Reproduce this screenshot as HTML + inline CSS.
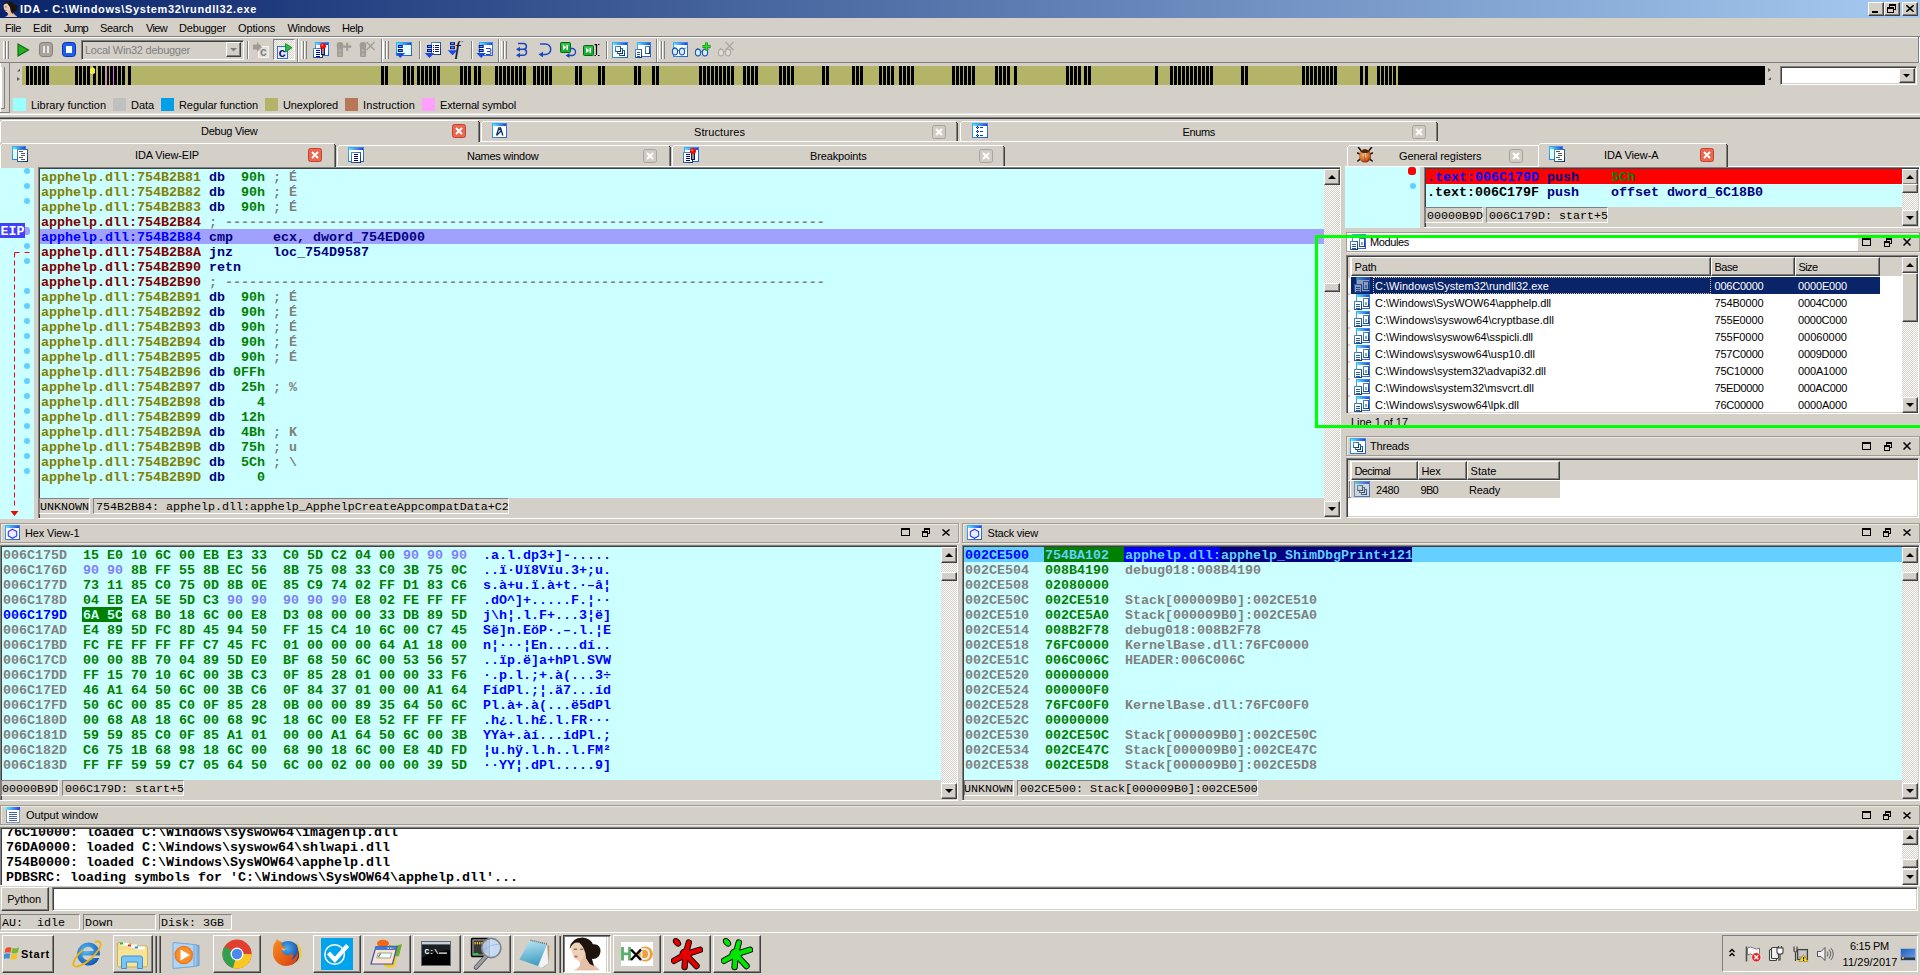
<!DOCTYPE html>
<html><head><meta charset="utf-8"><title>IDA</title><style>
html,body{margin:0;padding:0}
body{width:1920px;height:975px;overflow:hidden;background:#d4d0c8;position:relative;font-family:"Liberation Sans",sans-serif;font-size:11px;color:#000}
.a{position:absolute;box-sizing:content-box}
.t{position:absolute;white-space:pre;line-height:13px;height:13px}
.m{position:absolute;white-space:pre;font-family:"Liberation Mono",monospace;font-weight:bold;font-size:13.33px;line-height:15px;height:15px}
.o{position:absolute;white-space:pre;font-family:"Liberation Mono",monospace;font-weight:bold;font-size:13.33px;line-height:15px;height:15px;color:#000}
.c{position:absolute;white-space:pre;font-family:"Liberation Mono",monospace;font-size:11.67px;line-height:13px;height:13px;color:#000}
.sk{border:1px solid;border-color:#808080 #fff #fff #808080;box-shadow:inset 1px 1px 0 #404040,inset -1px -1px 0 #d4d0c8}
.sk1{border:1px solid;border-color:#808080 #fff #fff #808080}
.rs{border:1px solid;border-color:#fff #404040 #404040 #fff;box-shadow:inset -1px -1px 0 #808080,inset 1px 1px 0 #d4d0c8}
.et{border:1px solid #a09c94;box-shadow:inset 1px 1px 0 #ece9e2,1px 1px 0 #ece9e2}
.rs1{border:1px solid;border-color:#fff #808080 #808080 #fff}
</style></head><body>
<svg width="0" height="0" style="position:absolute"><defs><linearGradient id="wg" x1="0" y1="0" x2="1" y2="1"><stop offset="0" stop-color="#38b8f8"/><stop offset="1" stop-color="#2858d0"/></linearGradient><linearGradient id="hg" x1="0" y1="0" x2="1" y2="0"><stop offset="0" stop-color="#60e8ff"/><stop offset="1" stop-color="#2840e0"/></linearGradient><linearGradient id="dg" x1="0" y1="0" x2="1" y2="1"><stop offset="0" stop-color="#5898c8"/><stop offset="1" stop-color="#083060"/></linearGradient></defs></svg>
<div class="a" style="left:0px;top:0px;width:1920px;height:18px;background:linear-gradient(90deg,#0a246a 0%,#a6caf0 100%);"></div>
<svg class="a" style="left:2px;top:1px" width="16" height="16" viewBox="0 0 16 16"><path d="M4.500 10.500L9 9.500L12.500 13.500L15.500 16H2.500Q6 15 6 12.500z" fill="#e4c0a8"/><path d="M0.800 5.500Q1.500 0.500 7 0.300Q11 0.800 12 3.500Q15.800 3.200 15.600 7.200Q15 10.800 11.500 10.500L10.500 13L8.500 10L6.500 5.500L3.500 2.800z" fill="#1c120e"/><path d="M1.500 4.500Q3 2 5.500 2.800Q8.300 5.500 8.600 9.500L8.300 11.500Q5.500 12 3.500 10.500Q1.500 8 1.500 4.500z" fill="#e8cab2"/><rect x="3" y="9" width="1.600" height="1" fill="#c86048"/><rect x="3" y="5.500" width="2" height="0.800" fill="#806050"/></svg>
<span class="t" style="left:20px;top:3px;letter-spacing:0.636px;color:#fff;font-weight:bold;">IDA - C:\Windows\System32\rundll32.exe</span>
<div class="a rs" style="left:1868px;top:2px;width:14px;height:12px;background:#d4d0c8;"></div>
<div class="a" style="left:1872px;top:11px;width:6px;height:2px;background:#000;"></div>
<div class="a rs" style="left:1884px;top:2px;width:14px;height:12px;background:#d4d0c8;"></div>
<svg class="a" style="left:1887px;top:4px" width="10" height="10" viewBox="0 0 10 10"><rect x="2.5" y="0.5" width="6" height="5" fill="none" stroke="#000"/><rect x="2" y="0" width="7" height="2" fill="#000"/><rect x="0.5" y="3.5" width="6" height="5" fill="#d4d0c8" stroke="#000"/><rect x="0" y="3" width="7" height="2" fill="#000"/></svg>
<div class="a rs" style="left:1902px;top:2px;width:14px;height:12px;background:#d4d0c8;"></div>
<svg class="a" style="left:1906px;top:5px" width="8" height="7" viewBox="0 0 8 7"><path d="M0 0L8 7M8 0L0 7" stroke="#000" stroke-width="1.6"/></svg>
<span class="t" style="left:5px;top:22px;letter-spacing:-0.431px;">File</span>
<span class="t" style="left:33px;top:22px;letter-spacing:-0.114px;">Edit</span>
<span class="t" style="left:64px;top:22px;letter-spacing:-0.725px;">Jump</span>
<span class="t" style="left:100px;top:22px;letter-spacing:-0.309px;">Search</span>
<span class="t" style="left:146px;top:22px;letter-spacing:-0.661px;">View</span>
<span class="t" style="left:179px;top:22px;letter-spacing:-0.164px;">Debugger</span>
<span class="t" style="left:238px;top:22px;letter-spacing:-0.130px;">Options</span>
<span class="t" style="left:287.5px;top:22px;letter-spacing:-0.303px;">Windows</span>
<span class="t" style="left:342px;top:22px;letter-spacing:-0.406px;">Help</span>
<div class="a" style="left:0px;top:36px;width:1920px;height:1px;background:#808080;"></div>
<div class="a" style="left:0px;top:37px;width:1920px;height:1px;background:#fff;"></div>
<div class="a" style="left:0px;top:62px;width:1919px;height:1px;background:#808080;"></div>
<div class="a" style="left:1918px;top:37px;width:1px;height:25px;background:#808080;"></div>
<div class="a" style="left:1919px;top:37px;width:1px;height:26px;background:#fff;"></div>
<div class="a" style="left:3px;top:41px;width:1px;height:18px;background:#fff;"></div>
<div class="a" style="left:5px;top:41px;width:1px;height:18px;background:#808080;"></div>
<div class="a" style="left:6px;top:41px;width:1px;height:18px;background:#fff;"></div>
<div class="a" style="left:8px;top:41px;width:1px;height:18px;background:#808080;"></div>
<div class="a" style="left:301px;top:41px;width:1px;height:18px;background:#fff;"></div>
<div class="a" style="left:303px;top:41px;width:1px;height:18px;background:#808080;"></div>
<div class="a" style="left:304px;top:41px;width:1px;height:18px;background:#fff;"></div>
<div class="a" style="left:306px;top:41px;width:1px;height:18px;background:#808080;"></div>
<div class="a" style="left:383px;top:41px;width:1px;height:18px;background:#fff;"></div>
<div class="a" style="left:385px;top:41px;width:1px;height:18px;background:#808080;"></div>
<div class="a" style="left:386px;top:41px;width:1px;height:18px;background:#fff;"></div>
<div class="a" style="left:388px;top:41px;width:1px;height:18px;background:#808080;"></div>
<div class="a" style="left:501px;top:41px;width:1px;height:18px;background:#fff;"></div>
<div class="a" style="left:503px;top:41px;width:1px;height:18px;background:#808080;"></div>
<div class="a" style="left:504px;top:41px;width:1px;height:18px;background:#fff;"></div>
<div class="a" style="left:506px;top:41px;width:1px;height:18px;background:#808080;"></div>
<div class="a" style="left:659px;top:41px;width:1px;height:18px;background:#fff;"></div>
<div class="a" style="left:661px;top:41px;width:1px;height:18px;background:#808080;"></div>
<div class="a" style="left:662px;top:41px;width:1px;height:18px;background:#fff;"></div>
<div class="a" style="left:664px;top:41px;width:1px;height:18px;background:#808080;"></div>
<div class="a" style="left:297px;top:39px;width:1px;height:23px;background:#808080;"></div>
<div class="a" style="left:298px;top:39px;width:1px;height:23px;background:#fff;"></div>
<div class="a" style="left:381px;top:39px;width:1px;height:23px;background:#808080;"></div>
<div class="a" style="left:382px;top:39px;width:1px;height:23px;background:#fff;"></div>
<div class="a" style="left:498px;top:39px;width:1px;height:23px;background:#808080;"></div>
<div class="a" style="left:499px;top:39px;width:1px;height:23px;background:#fff;"></div>
<div class="a" style="left:656px;top:39px;width:1px;height:23px;background:#808080;"></div>
<div class="a" style="left:657px;top:39px;width:1px;height:23px;background:#fff;"></div>
<div class="a" style="left:247px;top:41px;width:1px;height:18px;background:#808080;"></div>
<div class="a" style="left:248px;top:41px;width:1px;height:18px;background:#fff;"></div>
<div class="a" style="left:419px;top:41px;width:1px;height:18px;background:#808080;"></div>
<div class="a" style="left:420px;top:41px;width:1px;height:18px;background:#fff;"></div>
<div class="a" style="left:471px;top:41px;width:1px;height:18px;background:#808080;"></div>
<div class="a" style="left:472px;top:41px;width:1px;height:18px;background:#fff;"></div>
<div class="a" style="left:606px;top:41px;width:1px;height:18px;background:#808080;"></div>
<div class="a" style="left:607px;top:41px;width:1px;height:18px;background:#fff;"></div>
<svg class="a" style="left:17px;top:43px" width="13" height="14" viewBox="0 0 13 14"><polygon points="1,1 11.5,7 1,13" fill="#20b020" stroke="#107010" stroke-width="1.2"/></svg>
<svg class="a" style="left:39px;top:42px" width="14" height="15" viewBox="0 0 14 15"><rect x="0.5" y="0.5" width="13" height="14" rx="3" fill="#a8a49c" stroke="#808080"/><rect x="4" y="4" width="2" height="7" fill="#e8e8e8"/><rect x="8" y="4" width="2" height="7" fill="#e8e8e8"/></svg>
<svg class="a" style="left:62px;top:42px" width="14" height="15" viewBox="0 0 14 15"><rect x="0.5" y="0.5" width="13" height="14" rx="3" fill="#2060e8" stroke="#1030b0"/><rect x="4" y="4" width="6" height="7" fill="#fff"/></svg>
<div class="a sk" style="left:81px;top:40px;width:161px;height:18px;background:#d4d0c8;"></div>
<span class="t" style="left:85px;top:44px;letter-spacing:-0.254px;color:#808080;">Local Win32 debugger</span>
<div class="a rs" style="left:226px;top:42px;width:13px;height:13px;background:#d4d0c8;"></div>
<svg class="a" style="left:230.0px;top:48.25px" width="7.0" height="3.5"><polygon points="0,0 7.0,0 3.5,3.5" fill="#808080"/></svg>
<svg class="a" style="left:252px;top:41px" width="18" height="18" viewBox="0 0 18 18"><rect x="6.500" y="5.500" width="10" height="11" fill="#e6e2da" stroke="#f4f2ee"/><polygon points="1,3.500 5,3.500 5,1 10,6 5,11 5,8.500 1,8.500" fill="#a09c94"/><text x="8" y="15" font-family="Liberation Sans" font-weight="bold" font-size="12" fill="#808080">c</text></svg>
<div class="a" style="left:273px;top:39px;width:22px;height:21px;background:repeating-conic-gradient(#fff 0% 25%,#d4d0c8 0% 50%) 0 0/2px 2px;border:1px solid;border-color:#808080 #fff #fff #808080;box-sizing:border-box;"></div>
<svg class="a" style="left:276px;top:42px" width="18" height="18" viewBox="0 0 18 18"><rect x="1.500" y="4.500" width="10" height="12" fill="#e8f0ff" stroke="#3070d0"/><text x="2.500" y="14.500" font-family="Liberation Sans" font-weight="bold" font-size="13" fill="#101080">c</text><polygon points="9.500,1.500 16,5.800 9.500,10" fill="#20c030" stroke="#108020" stroke-width="0.800"/></svg>
<svg class="a" style="left:313px;top:42px" width="17" height="17" viewBox="0 0 17 17"><g shape-rendering="crispEdges"><rect x="2" y="0" width="14" height="14" fill="url(#wg)"/><rect x="3" y="1" width="12" height="2" fill="url(#hg)"/><rect x="3" y="3" width="12" height="10" fill="#fff"/><rect x="0" y="6" width="10" height="10" fill="url(#dg)"/><rect x="1" y="7" width="8" height="8" fill="#fff"/><rect x="3" y="8" width="4" height="1" fill="#0000a0"/><rect x="3" y="10" width="4" height="1" fill="#0000a0"/><rect x="3" y="12" width="4" height="1" fill="#0000a0"/><rect x="3" y="14" width="4" height="1" fill="#0000a0"/><rect x="8" y="6" width="4" height="7" fill="#101070"/><rect x="9" y="6" width="2" height="6" fill="#909088"/></g><circle cx="10" cy="4" r="3" fill="#f00808"/><circle cx="9.300" cy="3.200" r="1" fill="#ff8070"/></svg>
<svg class="a" style="left:336px;top:41px" width="17" height="18" viewBox="0 0 17 18"><rect x="1.0" y="3" width="6" height="13" rx="1.500" fill="#a09c94"/><circle cx="4.0" cy="4.500" r="3.400" fill="#a09c94"/><circle cx="4.0" cy="9.500" r="1.600" fill="#b4b0a8"/><circle cx="4.0" cy="13.500" r="1.600" fill="#b4b0a8"/><path d="M11.200 1.700v8M7.200 5.700h8" stroke="#a09c94" stroke-width="2.200"/></svg>
<svg class="a" style="left:359px;top:41px" width="17" height="18" viewBox="0 0 17 18"><rect x="1.0" y="3" width="6" height="13" rx="1.500" fill="#a09c94"/><circle cx="4.0" cy="4.500" r="3.400" fill="#a09c94"/><circle cx="4.0" cy="9.500" r="1.600" fill="#b4b0a8"/><circle cx="4.0" cy="13.500" r="1.600" fill="#b4b0a8"/><path d="M7.500 1l8 8M15.500 1l-8 8" stroke="#a09c94" stroke-width="1.300"/></svg>
<svg class="a" style="left:395px;top:41px" width="18" height="18" viewBox="0 0 18 18"><g shape-rendering="crispEdges"><rect x="1" y="1" width="16" height="14" fill="url(#wg)"/><rect x="2" y="2" width="14" height="2" fill="url(#hg)"/><rect x="2" y="4" width="14" height="10" fill="#fff"/><rect x="2" y="4" width="14" height="10" fill="#e8ffff"/></g><rect x="2.8" y="4" width="5" height="3" fill="#101090"/><rect x="3.8" y="5" width="3" height="1" fill="#20c0e0"/><rect x="2.8" y="8" width="5" height="3" fill="#101090"/><rect x="3.8" y="9" width="3" height="1" fill="#20c0e0"/><polygon points="0.5,12 10.100000000000001,12 5.3,17" fill="#1848e0"/></svg>
<svg class="a" style="left:424px;top:41px" width="18" height="18" viewBox="0 0 18 18"><g shape-rendering="crispEdges"><rect x="7" y="1" width="10" height="13" fill="url(#dg)"/><rect x="8" y="2" width="8" height="11" fill="#fff"/><rect x="9" y="4" width="1" height="1" fill="#101090"/><rect x="9" y="6" width="1" height="1" fill="#101090"/><rect x="9" y="8" width="1" height="1" fill="#101090"/><rect x="9" y="10" width="1" height="1" fill="#101090"/><rect x="11" y="4" width="4" height="1" fill="#101090"/><rect x="11" y="6" width="4" height="1" fill="#101090"/><rect x="11" y="8" width="4" height="1" fill="#101090"/><rect x="11" y="10" width="4" height="1" fill="#101090"/></g><rect x="3" y="4" width="5" height="3" fill="#101090"/><rect x="4" y="5" width="3" height="1" fill="#20c0e0"/><rect x="3" y="8" width="5" height="3" fill="#101090"/><rect x="4" y="9" width="3" height="1" fill="#20c0e0"/><polygon points="0.7,12 10.3,12 5.5,17" fill="#1848e0"/></svg>
<svg class="a" style="left:447px;top:41px" width="18" height="18" viewBox="0 0 18 18"><text x="7.500" y="14" font-family="Liberation Serif" font-style="italic" font-size="21" fill="#101828">f</text><rect x="3" y="1.2" width="5" height="3" fill="#101090"/><rect x="4" y="2.2" width="3" height="1" fill="#20c0e0"/><rect x="3" y="5.2" width="5" height="3" fill="#101090"/><rect x="4" y="6.2" width="3" height="1" fill="#20c0e0"/><polygon points="0.7,9.2 10.3,9.2 5.5,14.2" fill="#1848e0"/></svg>
<svg class="a" style="left:476px;top:41px" width="18" height="18" viewBox="0 0 18 18"><g shape-rendering="crispEdges"><rect x="3" y="1" width="14" height="14" fill="url(#wg)"/><rect x="4" y="2" width="12" height="2" fill="url(#hg)"/><rect x="4" y="4" width="12" height="10" fill="#fff"/></g><path d="M10 7.500h3.500a1.500 1.500 0 0 1 0 3h-2.500M13.500 10.500a1.500 1.500 0 0 1 0 3h-3.500" fill="none" stroke="#2040c0" stroke-width="1.100"/><rect x="2.7" y="4" width="5" height="3" fill="#101090"/><rect x="3.7" y="5" width="3" height="1" fill="#20c0e0"/><rect x="2.7" y="8" width="5" height="3" fill="#101090"/><rect x="3.7" y="9" width="3" height="1" fill="#20c0e0"/><polygon points="0.39999999999999997,12 10.0,12 5.2,17" fill="#1848e0"/></svg>
<svg class="a" style="left:515px;top:41px" width="14" height="18" viewBox="0 0 14 18"><path d="M3 2.500h5.500a2.800 2.800 0 0 1 0 5.800h-5M8.500 8.300a3 3 0 0 1 0 6h-5.500" fill="none" stroke="#1848c0" stroke-width="1.500"/><polygon points="1,8.300 5,5.800 5,10.800" fill="#1848c0"/><polygon points="1,14.300 5,11.800 5,16.800" fill="#1848c0"/></svg>
<svg class="a" style="left:538px;top:41px" width="15" height="18" viewBox="0 0 15 18"><path d="M2 3h5.500a5 5 0 0 1 0 10.500h-4" fill="none" stroke="#1848c0" stroke-width="1.500"/><polygon points="0.500,13.500 5,10.700 5,16.300" fill="#1848c0"/></svg>
<svg class="a" style="left:560px;top:42px" width="17" height="17" viewBox="0 0 17 17"><rect x="0.5" y="0.5" width="10" height="10" rx="1" fill="#18b030" stroke="#0c6018"/><rect x="1.5" y="1.5" width="8" height="3" fill="#50d868" opacity="0.600"/><polygon points="3,3 6.5,5.5 3,8" fill="#fff"/><rect x="6.5" y="3" width="1.500" height="5" fill="#fff"/><path d="M10 6.500h2a3.500 3.500 0 0 1 0 7h-3.500" fill="none" stroke="#1848c0" stroke-width="1.400"/><polygon points="5.500,13.500 9.500,11 9.500,16" fill="#1848c0"/></svg>
<svg class="a" style="left:583px;top:43px" width="17" height="15" viewBox="0 0 17 15"><rect x="0.5" y="2.5" width="10" height="10" rx="1" fill="#18b030" stroke="#0c6018"/><rect x="1.5" y="3.5" width="8" height="3" fill="#50d868" opacity="0.600"/><polygon points="3,5 6.5,7.5 3,10" fill="#fff"/><rect x="6.5" y="5" width="1.500" height="5" fill="#fff"/><path d="M11.500 1.500h1.500M15 1.500h1.500M13.500 2v10M11.500 12.500h1.500M15 12.500h1.500" stroke="#000" stroke-width="1.200" fill="none"/><path d="M13 1.500q1 0 1 1M14 1.500q-1 0 -1 1" stroke="#000" fill="none"/></svg>
<svg class="a" style="left:612px;top:42px" width="16" height="16" viewBox="0 0 16 16"><g shape-rendering="crispEdges"><rect x="0" y="0" width="16" height="16" fill="url(#wg)"/><rect x="1" y="1" width="14" height="2" fill="url(#hg)"/><rect x="1" y="3" width="14" height="12" fill="#fff"/></g><rect x="7.5" y="8.5" width="5" height="5" fill="#f4fcff" stroke="url(#dg)"/><rect x="5.5" y="6.5" width="5" height="5" fill="#f4fcff" stroke="url(#dg)"/><rect x="3.5" y="4.5" width="5" height="5" fill="#f4fcff" stroke="url(#dg)"/></svg>
<svg class="a" style="left:635px;top:42px" width="17" height="16" viewBox="0 0 17 16"><g shape-rendering="crispEdges"><rect x="2" y="0" width="14" height="14.5" fill="url(#wg)"/><rect x="3" y="1" width="12" height="2" fill="url(#hg)"/><rect x="3" y="3" width="12" height="10.5" fill="#fff"/><rect x="0" y="7" width="7" height="9" fill="url(#dg)"/><rect x="1" y="8" width="5" height="7" fill="#fff"/><rect x="2" y="10" width="3" height="1" fill="#2858a8"/><rect x="2" y="12" width="3" height="1" fill="#2858a8"/><rect x="2" y="14" width="3" height="1" fill="#2858a8"/><rect x="10" y="4" width="5" height="8" fill="url(#dg)"/><rect x="11" y="5" width="3" height="6" fill="#fff"/></g></svg>
<svg class="a" style="left:671px;top:41px" width="18" height="17" viewBox="0 0 18 17"><g shape-rendering="crispEdges"><rect x="2" y="1" width="15" height="15" fill="url(#wg)"/><rect x="3" y="2" width="13" height="2" fill="url(#hg)"/><rect x="3" y="4" width="13" height="11" fill="#fff"/></g><ellipse cx="4" cy="10.5" rx="2.600" ry="3.400" fill="#d8ecff" stroke="#1858b0" stroke-width="1.100"/><ellipse cx="11" cy="10.5" rx="2.600" ry="3.400" fill="#d8ecff" stroke="#1858b0" stroke-width="1.100"/><path d="M6.5 10q1-1 2 0M3 7.5l1-1.500M13.5 8l1.500-1.500" fill="none" stroke="#1858b0"/></svg>
<svg class="a" style="left:694px;top:41px" width="18" height="18" viewBox="0 0 18 18"><ellipse cx="4" cy="11.5" rx="2.600" ry="3.400" fill="#d8ecff" stroke="#1858b0" stroke-width="1.100"/><ellipse cx="11" cy="11.5" rx="2.600" ry="3.400" fill="#d8ecff" stroke="#1858b0" stroke-width="1.100"/><path d="M6.5 11q1-1 2 0M3 8.5l1-1.500M13.5 9l1.500-1.500" fill="none" stroke="#1858b0"/><path d="M12.500 1.500v8M8.500 5.500h8" stroke="#109010" stroke-width="3"/><path d="M12.500 2v7M9 5.500h7" stroke="#30e030" stroke-width="1.600"/></svg>
<svg class="a" style="left:717px;top:41px" width="18" height="18" viewBox="0 0 18 18"><ellipse cx="4" cy="11.5" rx="2.600" ry="3.400" fill="#e0dcd4" stroke="#aca8a0" stroke-width="1.100"/><ellipse cx="11" cy="11.5" rx="2.600" ry="3.400" fill="#e0dcd4" stroke="#aca8a0" stroke-width="1.100"/><path d="M6.5 11q1-1 2 0M3 8.5l1-1.500M13.5 9l1.500-1.500" fill="none" stroke="#aca8a0"/><path d="M8.500 1l8 8M16.500 1l-8 8" stroke="#aca8a0" stroke-width="1.300"/></svg>
<div class="a" style="left:1px;top:67px;width:1px;height:41px;background:#fff;"></div>
<div class="a" style="left:4px;top:67px;width:1px;height:41px;background:#808080;"></div>
<div class="a" style="left:1px;top:108px;width:4px;height:1px;background:#808080;"></div>
<div class="a" style="left:0px;top:63px;width:1px;height:50px;background:#fff;"></div>
<div class="a" style="left:9px;top:63px;width:1px;height:50px;background:#808080;"></div>
<div class="a" style="left:0px;top:112px;width:10px;height:1px;background:#808080;"></div>
<svg class="a" style="left:17px;top:68px" width="3" height="4" viewBox="0 0 3 4"><polygon points="0,3.500 3,3.500 3,0.500" fill="#606060"/></svg>
<svg class="a" style="left:17px;top:77px" width="3" height="4" viewBox="0 0 3 4"><polygon points="0,0 3,2 0,4" fill="#606060"/></svg>
<div class="a" style="left:22px;top:66px;width:1743px;height:19px;background:#b4b469;"></div>
<svg class="a" style="left:22px;top:66px" width="1743" height="19" viewBox="0 0 1743 19"><rect x="4" y="0" width="3" height="19"/><rect x="8" y="0" width="3" height="19"/><rect x="12" y="0" width="3" height="19"/><rect x="16" y="0" width="3" height="19"/><rect x="20" y="0" width="3" height="19"/><rect x="24" y="0" width="3" height="19"/><rect x="53" y="0" width="3" height="19"/><rect x="57" y="0" width="3" height="19"/><rect x="61" y="0" width="3" height="19"/><rect x="65" y="0" width="3" height="19"/><rect x="71" y="0" width="3" height="19"/><rect x="76" y="0" width="3" height="19"/><rect x="80" y="0" width="3" height="19"/><rect x="84" y="0" width="3" height="19"/><rect x="88" y="0" width="3" height="19"/><rect x="92" y="0" width="3" height="19"/><rect x="96" y="0" width="3" height="19"/><rect x="100" y="0" width="3" height="19"/><rect x="106" y="0" width="3" height="19"/><rect x="359" y="0" width="3" height="19"/><rect x="363" y="0" width="3" height="19"/><rect x="381" y="0" width="3" height="19"/><rect x="385" y="0" width="3" height="19"/><rect x="389" y="0" width="3" height="19"/><rect x="395" y="0" width="3" height="19"/><rect x="399" y="0" width="3" height="19"/><rect x="403" y="0" width="3" height="19"/><rect x="407" y="0" width="3" height="19"/><rect x="411" y="0" width="3" height="19"/><rect x="415" y="0" width="3" height="19"/><rect x="438" y="0" width="3" height="19"/><rect x="442" y="0" width="3" height="19"/><rect x="446" y="0" width="3" height="19"/><rect x="452" y="0" width="3" height="19"/><rect x="456" y="0" width="3" height="19"/><rect x="473" y="0" width="3" height="19"/><rect x="477" y="0" width="3" height="19"/><rect x="481" y="0" width="3" height="19"/><rect x="485" y="0" width="3" height="19"/><rect x="489" y="0" width="3" height="19"/><rect x="493" y="0" width="3" height="19"/><rect x="497" y="0" width="3" height="19"/><rect x="501" y="0" width="3" height="19"/><rect x="511" y="0" width="3" height="19"/><rect x="515" y="0" width="3" height="19"/><rect x="519" y="0" width="3" height="19"/><rect x="523" y="0" width="3" height="19"/><rect x="527" y="0" width="3" height="19"/><rect x="553" y="0" width="3" height="19"/><rect x="557" y="0" width="3" height="19"/><rect x="576" y="0" width="3" height="19"/><rect x="580" y="0" width="3" height="19"/><rect x="612" y="0" width="3" height="19"/><rect x="616" y="0" width="3" height="19"/><rect x="630" y="0" width="3" height="19"/><rect x="634" y="0" width="3" height="19"/><rect x="677" y="0" width="3" height="19"/><rect x="681" y="0" width="3" height="19"/><rect x="685" y="0" width="3" height="19"/><rect x="689" y="0" width="3" height="19"/><rect x="693" y="0" width="3" height="19"/><rect x="697" y="0" width="3" height="19"/><rect x="701" y="0" width="3" height="19"/><rect x="705" y="0" width="3" height="19"/><rect x="709" y="0" width="3" height="19"/><rect x="721" y="0" width="3" height="19"/><rect x="725" y="0" width="3" height="19"/><rect x="729" y="0" width="3" height="19"/><rect x="733" y="0" width="3" height="19"/><rect x="757" y="0" width="3" height="19"/><rect x="761" y="0" width="3" height="19"/><rect x="765" y="0" width="3" height="19"/><rect x="769" y="0" width="3" height="19"/><rect x="800" y="0" width="3" height="19"/><rect x="804" y="0" width="3" height="19"/><rect x="830" y="0" width="3" height="19"/><rect x="834" y="0" width="3" height="19"/><rect x="838" y="0" width="3" height="19"/><rect x="857" y="0" width="3" height="19"/><rect x="861" y="0" width="3" height="19"/><rect x="865" y="0" width="3" height="19"/><rect x="869" y="0" width="3" height="19"/><rect x="877" y="0" width="3" height="19"/><rect x="881" y="0" width="3" height="19"/><rect x="885" y="0" width="3" height="19"/><rect x="889" y="0" width="3" height="19"/><rect x="930" y="0" width="3" height="19"/><rect x="934" y="0" width="3" height="19"/><rect x="938" y="0" width="3" height="19"/><rect x="942" y="0" width="3" height="19"/><rect x="946" y="0" width="3" height="19"/><rect x="950" y="0" width="3" height="19"/><rect x="973" y="0" width="3" height="19"/><rect x="977" y="0" width="3" height="19"/><rect x="981" y="0" width="3" height="19"/><rect x="985" y="0" width="3" height="19"/><rect x="992" y="0" width="3" height="19"/><rect x="1044" y="0" width="3" height="19"/><rect x="1048" y="0" width="3" height="19"/><rect x="1052" y="0" width="3" height="19"/><rect x="1056" y="0" width="3" height="19"/><rect x="1062" y="0" width="3" height="19"/><rect x="1066" y="0" width="3" height="19"/><rect x="1133" y="0" width="3" height="19"/><rect x="1148" y="0" width="3" height="19"/><rect x="1152" y="0" width="3" height="19"/><rect x="1156" y="0" width="3" height="19"/><rect x="1160" y="0" width="3" height="19"/><rect x="1164" y="0" width="3" height="19"/><rect x="1168" y="0" width="3" height="19"/><rect x="1172" y="0" width="3" height="19"/><rect x="1176" y="0" width="3" height="19"/><rect x="1180" y="0" width="3" height="19"/><rect x="1184" y="0" width="3" height="19"/><rect x="1188" y="0" width="3" height="19"/><rect x="1219" y="0" width="3" height="19"/><rect x="1223" y="0" width="3" height="19"/><rect x="1280" y="0" width="3" height="19"/><rect x="1284" y="0" width="3" height="19"/><rect x="1288" y="0" width="3" height="19"/><rect x="1292" y="0" width="3" height="19"/><rect x="1296" y="0" width="3" height="19"/><rect x="1300" y="0" width="3" height="19"/><rect x="1304" y="0" width="3" height="19"/><rect x="1308" y="0" width="3" height="19"/><rect x="1312" y="0" width="3" height="19"/><rect x="1338" y="0" width="3" height="19"/><rect x="1343" y="0" width="3" height="19"/><rect x="1355" y="0" width="3" height="19"/><rect x="1359" y="0" width="3" height="19"/><rect x="1363" y="0" width="3" height="19"/><rect x="1367" y="0" width="3" height="19"/><rect x="1371" y="0" width="3" height="19"/><rect x="1376" y="0" width="367" height="19"/><rect x="84" y="0" width="1" height="19" fill="#e070e0"/><rect x="91" y="0" width="1" height="19" fill="#e070e0"/><polygon points="68,3 71,1 73,3 73,7 70.5,8.5 68,7" fill="#f0f040"/></svg>
<svg class="a" style="left:1768px;top:68px" width="4" height="4" viewBox="0 0 4 4"><polygon points="0,0 3,2 0,4" fill="#606060"/></svg>
<svg class="a" style="left:1768px;top:77px" width="4" height="4" viewBox="0 0 4 4"><polygon points="0,3 3,3 3,0" fill="#606060"/></svg>
<div class="a sk" style="left:1780px;top:66px;width:135px;height:17px;background:#fff;"></div>
<div class="a rs" style="left:1899px;top:68px;width:14px;height:13px;background:#d4d0c8;"></div>
<svg class="a" style="left:1902.5px;top:74.25px" width="7.0" height="3.5"><polygon points="0,0 7.0,0 3.5,3.5" fill="#000"/></svg>
<div class="a" style="left:13px;top:98px;width:13px;height:13px;background:#99ffff;"></div>
<span class="t" style="left:31px;top:99px;letter-spacing:-0.013px;">Library function</span>
<div class="a" style="left:113px;top:98px;width:13px;height:13px;background:#c0c0c0;"></div>
<span class="t" style="left:131px;top:99px;letter-spacing:-0.059px;">Data</span>
<div class="a" style="left:161px;top:98px;width:13px;height:13px;background:#00a0e8;"></div>
<span class="t" style="left:179px;top:99px;letter-spacing:-0.069px;">Regular function</span>
<div class="a" style="left:265px;top:98px;width:13px;height:13px;background:#b4b469;"></div>
<span class="t" style="left:283px;top:99px;letter-spacing:-0.126px;">Unexplored</span>
<div class="a" style="left:345px;top:98px;width:13px;height:13px;background:#b87858;"></div>
<span class="t" style="left:363px;top:99px;letter-spacing:0.114px;">Instruction</span>
<div class="a" style="left:422px;top:98px;width:13px;height:13px;background:#ffa0ff;"></div>
<span class="t" style="left:440px;top:99px;letter-spacing:-0.150px;">External symbol</span>
<div class="a" style="left:0px;top:113px;width:1920px;height:1px;background:#e8e5de;"></div>
<div class="a" style="left:0px;top:114px;width:1920px;height:1px;background:#fff;"></div>
<div class="a" style="left:0px;top:117px;width:1920px;height:1px;background:#808080;"></div>
<div class="a" style="left:0px;top:118px;width:1920px;height:1px;background:#404040;"></div>
<div class="a" style="left:0px;top:120px;width:480px;height:22px;background:#d4d0c8;"></div>
<div class="a" style="left:2px;top:120px;width:476px;height:1px;background:#fff;"></div>
<div class="a" style="left:0px;top:122px;width:1px;height:20px;background:#fff;"></div>
<div class="a" style="left:1px;top:121px;width:1px;height:1px;background:#fff;"></div>
<div class="a" style="left:478px;top:122px;width:1px;height:20px;background:#808080;"></div>
<div class="a" style="left:479px;top:122px;width:1px;height:20px;background:#404040;"></div>
<div class="a" style="left:478px;top:121px;width:1px;height:1px;background:#404040;"></div>
<span class="t" style="left:201px;top:125px;letter-spacing:-0.262px;">Debug View</span>
<svg class="a" style="left:452px;top:124px" width="14" height="14" viewBox="0 0 14 14"><rect x="0.5" y="0.5" width="13" height="13" rx="2" fill="#e86850" stroke="#c84030"/><path d="M4 4l6 6M10 4l-6 6" stroke="#fff" stroke-width="2"/></svg>
<div class="a" style="left:481px;top:121px;width:477px;height:20px;background:#d4d0c8;"></div>
<div class="a" style="left:483px;top:121px;width:473px;height:1px;background:#fff;"></div>
<div class="a" style="left:481px;top:123px;width:1px;height:18px;background:#fff;"></div>
<div class="a" style="left:482px;top:122px;width:1px;height:1px;background:#fff;"></div>
<div class="a" style="left:956px;top:123px;width:1px;height:18px;background:#808080;"></div>
<div class="a" style="left:957px;top:123px;width:1px;height:18px;background:#404040;"></div>
<div class="a" style="left:956px;top:122px;width:1px;height:1px;background:#404040;"></div>
<svg class="a" style="left:492px;top:123px" width="15" height="15" viewBox="0 0 15 15"><g shape-rendering="crispEdges"><rect x="0" y="0" width="15" height="15" fill="url(#wg)"/><rect x="1" y="1" width="13" height="2" fill="url(#hg)"/><rect x="1" y="3" width="13" height="11" fill="#fff"/></g><path d="M4.500 12.500L6.800 4.800h1.800L10.800 12.500M6.800 6.500h1.800M5 12l4-4" fill="none" stroke="#103060" stroke-width="1.300"/></svg>
<span class="t" style="left:694px;top:126px;letter-spacing:0.087px;">Structures</span>
<svg class="a" style="left:932px;top:125px" width="14" height="14" viewBox="0 0 14 14"><rect x="0.5" y="0.5" width="13" height="13" rx="2" fill="#d0ccc4" stroke="#a8a49c"/><path d="M4 4l6 6M10 4l-6 6" stroke="#fff" stroke-width="2"/></svg>
<div class="a" style="left:960px;top:121px;width:478px;height:20px;background:#d4d0c8;"></div>
<div class="a" style="left:962px;top:121px;width:474px;height:1px;background:#fff;"></div>
<div class="a" style="left:960px;top:123px;width:1px;height:18px;background:#fff;"></div>
<div class="a" style="left:961px;top:122px;width:1px;height:1px;background:#fff;"></div>
<div class="a" style="left:1436px;top:123px;width:1px;height:18px;background:#808080;"></div>
<div class="a" style="left:1437px;top:123px;width:1px;height:18px;background:#404040;"></div>
<div class="a" style="left:1436px;top:122px;width:1px;height:1px;background:#404040;"></div>
<svg class="a" style="left:972px;top:123px" width="16" height="15" viewBox="0 0 16 15"><g shape-rendering="crispEdges"><rect x="0" y="0" width="16" height="15" fill="url(#wg)"/><rect x="1" y="1" width="14" height="2" fill="url(#hg)"/><rect x="1" y="3" width="14" height="11" fill="#fff"/><rect x="5" y="3" width="1" height="3" fill="#101890"/><rect x="4" y="4" width="3" height="1" fill="#101890"/><rect x="5" y="4" width="1" height="1" fill="#00e8f8"/><rect x="8" y="4" width="3" height="1" fill="#1040c0"/><rect x="5" y="7" width="1" height="3" fill="#101890"/><rect x="4" y="8" width="3" height="1" fill="#101890"/><rect x="5" y="8" width="1" height="1" fill="#00e8f8"/><rect x="8" y="8" width="3" height="1" fill="#1040c0"/><rect x="5" y="11" width="1" height="3" fill="#101890"/><rect x="4" y="12" width="3" height="1" fill="#101890"/><rect x="5" y="12" width="1" height="1" fill="#00e8f8"/><rect x="8" y="12" width="3" height="1" fill="#1040c0"/></g></svg>
<span class="t" style="left:1182.5px;top:126px;letter-spacing:-0.347px;">Enums</span>
<svg class="a" style="left:1412px;top:125px" width="14" height="14" viewBox="0 0 14 14"><rect x="0.5" y="0.5" width="13" height="13" rx="2" fill="#d0ccc4" stroke="#a8a49c"/><path d="M4 4l6 6M10 4l-6 6" stroke="#fff" stroke-width="2"/></svg>
<div class="a" style="left:480px;top:141px;width:958px;height:1px;background:#fff;"></div>
<div class="a" style="left:337px;top:145px;width:334px;height:21px;background:#d4d0c8;"></div>
<div class="a" style="left:339px;top:145px;width:330px;height:1px;background:#fff;"></div>
<div class="a" style="left:337px;top:147px;width:1px;height:19px;background:#fff;"></div>
<div class="a" style="left:338px;top:146px;width:1px;height:1px;background:#fff;"></div>
<div class="a" style="left:669px;top:147px;width:1px;height:19px;background:#808080;"></div>
<div class="a" style="left:670px;top:147px;width:1px;height:19px;background:#404040;"></div>
<div class="a" style="left:669px;top:146px;width:1px;height:1px;background:#404040;"></div>
<svg class="a" style="left:348px;top:147px" width="17" height="17" viewBox="0 0 17 17"><g shape-rendering="crispEdges"><rect x="0" y="0" width="16" height="15" fill="url(#wg)"/><rect x="1" y="1" width="14" height="2" fill="url(#hg)"/><rect x="1" y="3" width="14" height="11" fill="#fff"/><rect x="3" y="5" width="10" height="11" fill="url(#dg)"/><rect x="4" y="6" width="8" height="9" fill="#fff"/><rect x="6" y="7" width="4" height="1" fill="#0000a0"/><rect x="6" y="9" width="4" height="1" fill="#0000a0"/><rect x="6" y="11" width="4" height="1" fill="#0000a0"/><rect x="6" y="13" width="4" height="1" fill="#0000a0"/></g></svg>
<span class="t" style="left:467px;top:150px;letter-spacing:-0.257px;">Names window</span>
<svg class="a" style="left:643px;top:149px" width="14" height="14" viewBox="0 0 14 14"><rect x="0.5" y="0.5" width="13" height="13" rx="2" fill="#d0ccc4" stroke="#a8a49c"/><path d="M4 4l6 6M10 4l-6 6" stroke="#fff" stroke-width="2"/></svg>
<div class="a" style="left:672px;top:145px;width:333px;height:21px;background:#d4d0c8;"></div>
<div class="a" style="left:674px;top:145px;width:329px;height:1px;background:#fff;"></div>
<div class="a" style="left:672px;top:147px;width:1px;height:19px;background:#fff;"></div>
<div class="a" style="left:673px;top:146px;width:1px;height:1px;background:#fff;"></div>
<div class="a" style="left:1003px;top:147px;width:1px;height:19px;background:#808080;"></div>
<div class="a" style="left:1004px;top:147px;width:1px;height:19px;background:#404040;"></div>
<div class="a" style="left:1003px;top:146px;width:1px;height:1px;background:#404040;"></div>
<svg class="a" style="left:683px;top:147px" width="17" height="17" viewBox="0 0 17 17"><g shape-rendering="crispEdges"><rect x="1" y="0" width="15" height="15" fill="url(#wg)"/><rect x="2" y="1" width="13" height="2" fill="url(#hg)"/><rect x="2" y="3" width="13" height="11" fill="#fff"/><rect x="0" y="5" width="10" height="11" fill="url(#dg)"/><rect x="1" y="6" width="8" height="9" fill="#fff"/><rect x="3" y="7" width="4" height="1" fill="#0000a0"/><rect x="3" y="9" width="4" height="1" fill="#0000a0"/><rect x="3" y="11" width="4" height="1" fill="#0000a0"/><rect x="3" y="13" width="4" height="1" fill="#0000a0"/><rect x="8" y="6" width="4" height="7" fill="#101070"/><rect x="9" y="6" width="2" height="6" fill="#909088"/></g><circle cx="10" cy="4" r="3" fill="#f00808"/><circle cx="9.300" cy="3.200" r="1" fill="#ff8070"/></svg>
<span class="t" style="left:810px;top:150px;letter-spacing:-0.145px;">Breakpoints</span>
<svg class="a" style="left:979px;top:149px" width="14" height="14" viewBox="0 0 14 14"><rect x="0.5" y="0.5" width="13" height="13" rx="2" fill="#d0ccc4" stroke="#a8a49c"/><path d="M4 4l6 6M10 4l-6 6" stroke="#fff" stroke-width="2"/></svg>
<div class="a" style="left:0px;top:143px;width:336px;height:25px;background:#d4d0c8;"></div>
<div class="a" style="left:2px;top:143px;width:332px;height:1px;background:#fff;"></div>
<div class="a" style="left:0px;top:145px;width:1px;height:23px;background:#fff;"></div>
<div class="a" style="left:1px;top:144px;width:1px;height:1px;background:#fff;"></div>
<div class="a" style="left:334px;top:145px;width:1px;height:23px;background:#808080;"></div>
<div class="a" style="left:335px;top:145px;width:1px;height:23px;background:#404040;"></div>
<div class="a" style="left:334px;top:144px;width:1px;height:1px;background:#404040;"></div>
<svg class="a" style="left:12px;top:146px" width="16" height="16" viewBox="0 0 16 16"><g shape-rendering="crispEdges"><rect x="0" y="0" width="14" height="14" fill="url(#wg)"/><rect x="1" y="1" width="12" height="2" fill="url(#hg)"/><rect x="1" y="3" width="12" height="10" fill="#fff"/><rect x="1" y="3" width="12" height="10" fill="#e0ffff"/><rect x="5" y="3" width="11" height="13" fill="url(#dg)"/><rect x="6" y="4" width="9" height="11" fill="#fff"/><rect x="7" y="5" width="4" height="1" fill="#505860"/><rect x="9" y="7" width="4" height="1" fill="#505860"/><rect x="9" y="9" width="4" height="1" fill="#505860"/><rect x="7" y="11" width="4" height="1" fill="#505860"/><rect x="9" y="13" width="4" height="1" fill="#505860"/></g></svg>
<span class="t" style="left:135px;top:149px;letter-spacing:-0.152px;">IDA View-EIP</span>
<svg class="a" style="left:308px;top:148px" width="14" height="14" viewBox="0 0 14 14"><rect x="0.5" y="0.5" width="13" height="13" rx="2" fill="#e86850" stroke="#c84030"/><path d="M4 4l6 6M10 4l-6 6" stroke="#fff" stroke-width="2"/></svg>
<div class="a" style="left:1347px;top:145px;width:193px;height:21px;background:#d4d0c8;"></div>
<div class="a" style="left:1349px;top:145px;width:189px;height:1px;background:#fff;"></div>
<div class="a" style="left:1347px;top:147px;width:1px;height:19px;background:#fff;"></div>
<div class="a" style="left:1348px;top:146px;width:1px;height:1px;background:#fff;"></div>
<div class="a" style="left:1538px;top:147px;width:1px;height:19px;background:#808080;"></div>
<div class="a" style="left:1539px;top:147px;width:1px;height:19px;background:#404040;"></div>
<div class="a" style="left:1538px;top:146px;width:1px;height:1px;background:#404040;"></div>
<svg class="a" style="left:1357px;top:146.5px" width="16" height="16" viewBox="0 0 16 16"><defs><radialGradient id="bgg" cx="0.42" cy="0.4" r="0.62"><stop offset="0" stop-color="#f0b870"/><stop offset="0.65" stop-color="#d07028"/><stop offset="1" stop-color="#981808"/></radialGradient></defs><path d="M1.500 0.500l2.500 3M14.500 0.500l-2.500 3M0.500 6l2.500 1M15.500 6l-2.500 1M0.800 14l2.700-2.200M15.200 14l-2.700-2.200" stroke="#101010" stroke-width="1.500" stroke-linecap="round" fill="none"/><ellipse cx="8" cy="9" rx="6" ry="6.600" fill="url(#bgg)"/><path d="M3.500 4.500q4.500-5 9 0q-2 2-4.500 1.500q-2.500 0.500-4.500-1.500z" fill="#48280c"/><path d="M8 5.500q-1 5 0 10q1-5 0-10z" fill="#b03818"/><path d="M8.600 6v5" stroke="#fff" stroke-width="0.700" opacity="0.700"/></svg>
<span class="t" style="left:1399px;top:150px;letter-spacing:-0.110px;">General registers</span>
<svg class="a" style="left:1509px;top:149px" width="14" height="14" viewBox="0 0 14 14"><rect x="0.5" y="0.5" width="13" height="13" rx="2" fill="#d0ccc4" stroke="#a8a49c"/><path d="M4 4l6 6M10 4l-6 6" stroke="#fff" stroke-width="2"/></svg>
<div class="a" style="left:1538px;top:143px;width:190px;height:25px;background:#d4d0c8;"></div>
<div class="a" style="left:1540px;top:143px;width:186px;height:1px;background:#fff;"></div>
<div class="a" style="left:1538px;top:145px;width:1px;height:23px;background:#fff;"></div>
<div class="a" style="left:1539px;top:144px;width:1px;height:1px;background:#fff;"></div>
<div class="a" style="left:1726px;top:145px;width:1px;height:23px;background:#808080;"></div>
<div class="a" style="left:1727px;top:145px;width:1px;height:23px;background:#404040;"></div>
<div class="a" style="left:1726px;top:144px;width:1px;height:1px;background:#404040;"></div>
<svg class="a" style="left:1549px;top:146px" width="16" height="16" viewBox="0 0 16 16"><g shape-rendering="crispEdges"><rect x="0" y="0" width="14" height="14" fill="url(#wg)"/><rect x="1" y="1" width="12" height="2" fill="url(#hg)"/><rect x="1" y="3" width="12" height="10" fill="#fff"/><rect x="1" y="3" width="12" height="10" fill="#e0ffff"/><rect x="5" y="3" width="11" height="13" fill="url(#dg)"/><rect x="6" y="4" width="9" height="11" fill="#fff"/><rect x="7" y="5" width="4" height="1" fill="#505860"/><rect x="9" y="7" width="4" height="1" fill="#505860"/><rect x="9" y="9" width="4" height="1" fill="#505860"/><rect x="7" y="11" width="4" height="1" fill="#505860"/><rect x="9" y="13" width="4" height="1" fill="#505860"/></g></svg>
<span class="t" style="left:1604px;top:149px;letter-spacing:-0.093px;">IDA View-A</span>
<svg class="a" style="left:1700px;top:148px" width="14" height="14" viewBox="0 0 14 14"><rect x="0.5" y="0.5" width="13" height="13" rx="2" fill="#e86850" stroke="#c84030"/><path d="M4 4l6 6M10 4l-6 6" stroke="#fff" stroke-width="2"/></svg>
<div class="a" style="left:336px;top:166px;width:1005px;height:1px;background:#fff;"></div>
<div class="a" style="left:1345px;top:166px;width:193px;height:1px;background:#fff;"></div>
<div class="a" style="left:1728px;top:166px;width:192px;height:1px;background:#fff;"></div>
<div class="a" style="left:0px;top:168px;width:34px;height:351px;background:#ccffff;"></div>
<div class="a" style="left:38px;top:167px;width:1303px;height:1px;background:#808080;"></div>
<div class="a" style="left:39px;top:168px;width:1302px;height:1px;background:#404040;"></div>
<div class="a" style="left:38px;top:167px;width:1px;height:352px;background:#808080;"></div>
<div class="a" style="left:39px;top:168px;width:1px;height:351px;background:#404040;"></div>
<div class="a" style="left:38px;top:518px;width:1303px;height:1px;background:#fff;"></div>
<div class="a" style="left:1340px;top:167px;width:1px;height:352px;background:#fff;"></div>
<div class="a" style="left:40px;top:169px;width:1284px;height:329px;background:#ccffff;"></div>
<div class="a" style="left:40px;top:229px;width:1284px;height:15px;background:#a0a0ff;"></div>
<div class="a" style="left:1324px;top:169px;width:16px;height:348px;background:repeating-conic-gradient(#fff 0% 25%,#d4d0c8 0% 50%) 0 0/2px 2px;"></div>
<div class="a rs" style="left:1324px;top:169px;width:14px;height:14px;background:#d4d0c8;"></div>
<svg class="a" style="left:1328.0px;top:175.0px" width="8" height="4"><polygon points="0,4 8,4 4,0" fill="#000"/></svg>
<div class="a rs" style="left:1324px;top:501px;width:14px;height:14px;background:#d4d0c8;"></div>
<svg class="a" style="left:1328.0px;top:507.0px" width="8" height="4"><polygon points="0,0 8,0 4,4" fill="#000"/></svg>
<div class="a rs" style="left:1324px;top:283px;width:14px;height:7px;background:#d4d0c8;"></div>
<div class="a" style="left:40px;top:498px;width:1284px;height:20px;background:#d4d0c8;"></div>
<div class="a sk1" style="left:39px;top:498px;width:49px;height:14px;background:transparent;"></div>
<span class="c" style="left:40px;top:501px">UNKNOWN</span>
<div class="a sk1" style="left:93px;top:498px;width:414px;height:14px;background:transparent;"></div>
<span class="c" style="left:96px;top:501px">754B2B84: apphelp.dll:apphelp_ApphelpCreateAppcompatData+C2</span>
<div class="m" style="left:41px;top:170px;"><span style="color:#808000">apphelp.dll:754B2B81 </span><span style="color:#000080">db </span><span style="color:#008000"> 90h</span><span style="color:#808080"> ; É</span></div>
<div class="a" style="left:24px;top:168px;width:6px;height:6px;background:#64d0ff;border-radius:3px;"></div>
<div class="m" style="left:41px;top:185px;"><span style="color:#808000">apphelp.dll:754B2B82 </span><span style="color:#000080">db </span><span style="color:#008000"> 90h</span><span style="color:#808080"> ; É</span></div>
<div class="a" style="left:24px;top:183px;width:6px;height:6px;background:#64d0ff;border-radius:3px;"></div>
<div class="m" style="left:41px;top:200px;"><span style="color:#808000">apphelp.dll:754B2B83 </span><span style="color:#000080">db </span><span style="color:#008000"> 90h</span><span style="color:#808080"> ; É</span></div>
<div class="a" style="left:24px;top:198px;width:6px;height:6px;background:#64d0ff;border-radius:3px;"></div>
<div class="m" style="left:41px;top:215px;"><span style="color:#800000">apphelp.dll:754B2B84 </span><span style="color:#808080">; ---------------------------------------------------------------------------</span></div>
<div class="m" style="left:41px;top:230px;"><span style="color:#0000ff">apphelp.dll:754B2B84 </span><span style="color:#000080">cmp     ecx, dword_754ED000</span></div>
<div class="m" style="left:41px;top:245px;"><span style="color:#800000">apphelp.dll:754B2B8A </span><span style="color:#000080">jnz     loc_754D9587</span></div>
<div class="a" style="left:24px;top:243px;width:6px;height:6px;background:#64d0ff;border-radius:3px;"></div>
<div class="m" style="left:41px;top:260px;"><span style="color:#800000">apphelp.dll:754B2B90 </span><span style="color:#000080">retn</span></div>
<div class="a" style="left:24px;top:258px;width:6px;height:6px;background:#64d0ff;border-radius:3px;"></div>
<div class="m" style="left:41px;top:275px;"><span style="color:#800000">apphelp.dll:754B2B90 </span><span style="color:#808080">; ---------------------------------------------------------------------------</span></div>
<div class="m" style="left:41px;top:290px;"><span style="color:#808000">apphelp.dll:754B2B91 </span><span style="color:#000080">db </span><span style="color:#008000"> 90h</span><span style="color:#808080"> ; É</span></div>
<div class="a" style="left:24px;top:288px;width:6px;height:6px;background:#64d0ff;border-radius:3px;"></div>
<div class="m" style="left:41px;top:305px;"><span style="color:#808000">apphelp.dll:754B2B92 </span><span style="color:#000080">db </span><span style="color:#008000"> 90h</span><span style="color:#808080"> ; É</span></div>
<div class="a" style="left:24px;top:303px;width:6px;height:6px;background:#64d0ff;border-radius:3px;"></div>
<div class="m" style="left:41px;top:320px;"><span style="color:#808000">apphelp.dll:754B2B93 </span><span style="color:#000080">db </span><span style="color:#008000"> 90h</span><span style="color:#808080"> ; É</span></div>
<div class="a" style="left:24px;top:318px;width:6px;height:6px;background:#64d0ff;border-radius:3px;"></div>
<div class="m" style="left:41px;top:335px;"><span style="color:#808000">apphelp.dll:754B2B94 </span><span style="color:#000080">db </span><span style="color:#008000"> 90h</span><span style="color:#808080"> ; É</span></div>
<div class="a" style="left:24px;top:333px;width:6px;height:6px;background:#64d0ff;border-radius:3px;"></div>
<div class="m" style="left:41px;top:350px;"><span style="color:#808000">apphelp.dll:754B2B95 </span><span style="color:#000080">db </span><span style="color:#008000"> 90h</span><span style="color:#808080"> ; É</span></div>
<div class="a" style="left:24px;top:348px;width:6px;height:6px;background:#64d0ff;border-radius:3px;"></div>
<div class="m" style="left:41px;top:365px;"><span style="color:#808000">apphelp.dll:754B2B96 </span><span style="color:#000080">db </span><span style="color:#008000">0FFh</span></div>
<div class="a" style="left:24px;top:363px;width:6px;height:6px;background:#64d0ff;border-radius:3px;"></div>
<div class="m" style="left:41px;top:380px;"><span style="color:#808000">apphelp.dll:754B2B97 </span><span style="color:#000080">db </span><span style="color:#008000"> 25h</span><span style="color:#808080"> ; %</span></div>
<div class="a" style="left:24px;top:378px;width:6px;height:6px;background:#64d0ff;border-radius:3px;"></div>
<div class="m" style="left:41px;top:395px;"><span style="color:#808000">apphelp.dll:754B2B98 </span><span style="color:#000080">db </span><span style="color:#008000">   4</span></div>
<div class="a" style="left:24px;top:393px;width:6px;height:6px;background:#64d0ff;border-radius:3px;"></div>
<div class="m" style="left:41px;top:410px;"><span style="color:#808000">apphelp.dll:754B2B99 </span><span style="color:#000080">db </span><span style="color:#008000"> 12h</span></div>
<div class="a" style="left:24px;top:408px;width:6px;height:6px;background:#64d0ff;border-radius:3px;"></div>
<div class="m" style="left:41px;top:425px;"><span style="color:#808000">apphelp.dll:754B2B9A </span><span style="color:#000080">db </span><span style="color:#008000"> 4Bh</span><span style="color:#808080"> ; K</span></div>
<div class="a" style="left:24px;top:423px;width:6px;height:6px;background:#64d0ff;border-radius:3px;"></div>
<div class="m" style="left:41px;top:440px;"><span style="color:#808000">apphelp.dll:754B2B9B </span><span style="color:#000080">db </span><span style="color:#008000"> 75h</span><span style="color:#808080"> ; u</span></div>
<div class="a" style="left:24px;top:438px;width:6px;height:6px;background:#64d0ff;border-radius:3px;"></div>
<div class="m" style="left:41px;top:455px;"><span style="color:#808000">apphelp.dll:754B2B9C </span><span style="color:#000080">db </span><span style="color:#008000"> 5Ch</span><span style="color:#808080"> ; \</span></div>
<div class="a" style="left:24px;top:453px;width:6px;height:6px;background:#64d0ff;border-radius:3px;"></div>
<div class="m" style="left:41px;top:470px;"><span style="color:#808000">apphelp.dll:754B2B9D </span><span style="color:#000080">db </span><span style="color:#008000">   0</span></div>
<div class="a" style="left:24px;top:468px;width:6px;height:6px;background:#64d0ff;border-radius:3px;"></div>
<div class="a" style="left:0px;top:223px;width:25px;height:15px;background:#4040ff;"></div>
<div class="a" style="left:25px;top:227px;width:5px;height:8px;background:#a0a0ff;border-radius:0 3px 3px 0;"></div>
<span class="m" style="left:0.500px;top:224px;color:#fff">EIP</span>
<svg class="a" style="left:8px;top:250px" width="24" height="268" viewBox="0 0 24 268"><path d="M6.5 2.5V258" stroke="#f00" stroke-width="1" stroke-dasharray="5 3" fill="none"/><path d="M6.5 2.5H22" stroke="#f00" stroke-width="1" stroke-dasharray="5 5" fill="none"/><polygon points="2.500,261 10.500,261 6.500,266" fill="#f00"/></svg>
<div class="a" style="left:1345px;top:167px;width:75px;height:61px;background:#ccffff;"></div>
<div class="a" style="left:1424px;top:167px;width:496px;height:1px;background:#808080;"></div>
<div class="a" style="left:1425px;top:168px;width:495px;height:1px;background:#404040;"></div>
<div class="a" style="left:1424px;top:167px;width:1px;height:61px;background:#808080;"></div>
<div class="a" style="left:1425px;top:168px;width:1px;height:60px;background:#404040;"></div>
<div class="a" style="left:1424px;top:227px;width:496px;height:1px;background:#fff;"></div>
<div class="a" style="left:1919px;top:167px;width:1px;height:61px;background:#fff;"></div>
<div class="a" style="left:1426px;top:169px;width:476px;height:38px;background:#ccffff;"></div>
<div class="a" style="left:1426px;top:169px;width:476px;height:15px;background:#ff0000;"></div>
<div class="m" style="left:1427px;top:170px;"><span style="color:#0000ff">.text:006C179D </span><span style="color:#000080">push    </span><span style="color:#008000">5Ch</span></div>
<div class="m" style="left:1427px;top:185px;"><span style="color:#000">.text:006C179F </span><span style="color:#000080">push    offset dword_6C18B0</span></div>
<div class="a" style="left:1408px;top:167px;width:8px;height:8px;background:#ff0000;border-radius:3px;"></div>
<div class="a" style="left:1410px;top:183px;width:6px;height:6px;background:#64d0ff;border-radius:3px;"></div>
<div class="a sk1" style="left:1425px;top:207px;width:56px;height:14px;background:transparent;"></div>
<span class="c" style="left:1427px;top:210px">00000B9D</span>
<div class="a sk1" style="left:1486px;top:207px;width:120px;height:14px;background:transparent;"></div>
<span class="c" style="left:1489px;top:210px">006C179D: start+5</span>
<div class="a" style="left:1902px;top:169px;width:16px;height:57px;background:repeating-conic-gradient(#fff 0% 25%,#d4d0c8 0% 50%) 0 0/2px 2px;"></div>
<div class="a rs" style="left:1902px;top:169px;width:14px;height:14px;background:#d4d0c8;"></div>
<svg class="a" style="left:1906.0px;top:175.0px" width="8" height="4"><polygon points="0,4 8,4 4,0" fill="#000"/></svg>
<div class="a rs" style="left:1902px;top:210px;width:14px;height:14px;background:#d4d0c8;"></div>
<svg class="a" style="left:1906.0px;top:216.0px" width="8" height="4"><polygon points="0,0 8,0 4,4" fill="#000"/></svg>
<div class="a rs" style="left:1902px;top:184px;width:14px;height:7px;background:#d4d0c8;"></div>
<div class="a et" style="left:1346px;top:232px;width:572px;height:18px;"></div>
<div class="a" style="left:1347px;top:233px;width:511px;height:18px;background:#fff;"></div>
<svg class="a" style="left:1350px;top:234px" width="17" height="16" viewBox="0 0 17 16"><g shape-rendering="crispEdges"><rect x="2" y="0" width="14" height="15" fill="url(#wg)"/><rect x="3" y="1" width="12" height="2" fill="url(#hg)"/><rect x="3" y="3" width="12" height="11" fill="#fff"/><rect x="0" y="7" width="8" height="9" fill="url(#dg)"/><rect x="1" y="8" width="6" height="7" fill="#fff"/><rect x="2" y="10" width="4" height="1" fill="#2858a8"/><rect x="2" y="12" width="4" height="1" fill="#2858a8"/><rect x="2" y="14" width="4" height="1" fill="#2858a8"/><rect x="9" y="4" width="6" height="9" fill="url(#dg)"/><rect x="10" y="5" width="4" height="7" fill="#fff"/><rect x="11" y="8" width="2" height="3" fill="#78a8e0"/></g></svg>
<span class="t" style="left:1370px;top:236px;letter-spacing:-0.368px;">Modules</span>
<svg class="a" style="left:1862px;top:238px" width="9" height="8" viewBox="0 0 9 8"><rect x="0.5" y="1" width="8" height="6.5" fill="none" stroke="#000"/><rect x="0" y="0" width="9" height="2" fill="#000"/></svg>
<svg class="a" style="left:1883px;top:238px" width="9" height="9" viewBox="0 0 9 9"><rect x="3.500" y="0.500" width="5" height="5" fill="none" stroke="#000"/><rect x="3" y="0" width="6" height="2" fill="#000"/><rect x="1.500" y="3.500" width="5" height="5" fill="#d4d0c8" stroke="#000"/><rect x="1" y="3" width="6" height="2" fill="#000"/></svg>
<svg class="a" style="left:1903px;top:238px" width="8" height="8" viewBox="0 0 8 8"><path d="M0.5 0.5L7.5 7.5M7.5 0.5L0.5 7.5" stroke="#000" stroke-width="1.5"/></svg>
<div class="a sk" style="left:1346px;top:255px;width:571px;height:157px;background:#fff;"></div>
<div class="a" style="left:1348px;top:257px;width:3px;height:19px;background:#d4d0c8;"></div>
<div class="a" style="left:1350px;top:257px;width:1px;height:18px;background:#fff;"></div>
<div class="a" style="left:1348px;top:276px;width:2px;height:2px;background:#d4d0c8;"></div>
<div class="a" style="left:1348px;top:293px;width:2px;height:2px;background:#d4d0c8;"></div>
<div class="a" style="left:1348px;top:310px;width:2px;height:2px;background:#d4d0c8;"></div>
<div class="a" style="left:1348px;top:327px;width:2px;height:2px;background:#d4d0c8;"></div>
<div class="a" style="left:1348px;top:344px;width:2px;height:2px;background:#d4d0c8;"></div>
<div class="a" style="left:1348px;top:361px;width:2px;height:2px;background:#d4d0c8;"></div>
<div class="a" style="left:1348px;top:378px;width:2px;height:2px;background:#d4d0c8;"></div>
<div class="a" style="left:1348px;top:395px;width:2px;height:2px;background:#d4d0c8;"></div>
<div class="a" style="left:1348px;top:412px;width:2px;height:2px;background:#d4d0c8;"></div>
<div class="a" style="left:1351px;top:257px;width:551px;height:19px;background:#d4d0c8;"></div>
<div class="a" style="left:1351px;top:257px;width:360px;height:19px;background:#d4d0c8;box-sizing:border-box;border:1px solid;border-color:#fff #404040 #404040 #fff;box-shadow:inset -1px -1px 0 #808080;"></div>
<span class="t" style="left:1354.5px;top:261px;letter-spacing:-0.157px;">Path</span>
<div class="a" style="left:1711px;top:257px;width:84px;height:19px;background:#d4d0c8;box-sizing:border-box;border:1px solid;border-color:#fff #404040 #404040 #fff;box-shadow:inset -1px -1px 0 #808080;"></div>
<span class="t" style="left:1714.5px;top:261px;letter-spacing:-0.518px;">Base</span>
<div class="a" style="left:1795px;top:257px;width:85px;height:19px;background:#d4d0c8;box-sizing:border-box;border:1px solid;border-color:#fff #404040 #404040 #fff;box-shadow:inset -1px -1px 0 #808080;"></div>
<span class="t" style="left:1798.5px;top:261px;letter-spacing:-0.600px;">Size</span>
<div class="a" style="left:1351px;top:277px;width:529px;height:17px;background:#0a246a;"></div>
<div class="a" style="left:1373px;top:277px;width:338px;height:17px;box-sizing:border-box;border:1px dotted #d8c890;"></div>
<svg class="a" style="left:1354px;top:277px" width="17" height="16" viewBox="0 0 17 16"><g shape-rendering="crispEdges"><rect x="2" y="0" width="14" height="15" fill="url(#wg)"/><rect x="3" y="1" width="12" height="2" fill="url(#hg)"/><rect x="3" y="3" width="12" height="11" fill="#fff"/><rect x="0" y="7" width="8" height="9" fill="url(#dg)"/><rect x="1" y="8" width="6" height="7" fill="#fff"/><rect x="2" y="10" width="4" height="1" fill="#2858a8"/><rect x="2" y="12" width="4" height="1" fill="#2858a8"/><rect x="2" y="14" width="4" height="1" fill="#2858a8"/><rect x="9" y="4" width="6" height="9" fill="url(#dg)"/><rect x="10" y="5" width="4" height="7" fill="#fff"/><rect x="11" y="8" width="2" height="3" fill="#78a8e0"/></g><rect width="17" height="16" fill="#0a246a" opacity="0.450"/></svg>
<span class="t" style="left:1375px;top:280px;letter-spacing:0.011px;color:#fff;">C:\Windows\System32\rundll32.exe</span>
<span class="t" style="left:1714.5px;top:280px;letter-spacing:-0.221px;color:#fff;">006C0000</span>
<span class="t" style="left:1798px;top:280px;letter-spacing:-0.145px;color:#fff;">0000E000</span>
<svg class="a" style="left:1354px;top:294px" width="17" height="16" viewBox="0 0 17 16"><g shape-rendering="crispEdges"><rect x="2" y="0" width="14" height="15" fill="url(#wg)"/><rect x="3" y="1" width="12" height="2" fill="url(#hg)"/><rect x="3" y="3" width="12" height="11" fill="#fff"/><rect x="0" y="7" width="8" height="9" fill="url(#dg)"/><rect x="1" y="8" width="6" height="7" fill="#fff"/><rect x="2" y="10" width="4" height="1" fill="#2858a8"/><rect x="2" y="12" width="4" height="1" fill="#2858a8"/><rect x="2" y="14" width="4" height="1" fill="#2858a8"/><rect x="9" y="4" width="6" height="9" fill="url(#dg)"/><rect x="10" y="5" width="4" height="7" fill="#fff"/><rect x="11" y="8" width="2" height="3" fill="#78a8e0"/></g></svg>
<span class="t" style="left:1375px;top:297px;letter-spacing:-0.061px;color:#000;">C:\Windows\SysWOW64\apphelp.dll</span>
<span class="t" style="left:1714.5px;top:297px;letter-spacing:-0.145px;color:#000;">754B0000</span>
<span class="t" style="left:1798px;top:297px;letter-spacing:-0.221px;color:#000;">0004C000</span>
<svg class="a" style="left:1354px;top:311px" width="17" height="16" viewBox="0 0 17 16"><g shape-rendering="crispEdges"><rect x="2" y="0" width="14" height="15" fill="url(#wg)"/><rect x="3" y="1" width="12" height="2" fill="url(#hg)"/><rect x="3" y="3" width="12" height="11" fill="#fff"/><rect x="0" y="7" width="8" height="9" fill="url(#dg)"/><rect x="1" y="8" width="6" height="7" fill="#fff"/><rect x="2" y="10" width="4" height="1" fill="#2858a8"/><rect x="2" y="12" width="4" height="1" fill="#2858a8"/><rect x="2" y="14" width="4" height="1" fill="#2858a8"/><rect x="9" y="4" width="6" height="9" fill="url(#dg)"/><rect x="10" y="5" width="4" height="7" fill="#fff"/><rect x="11" y="8" width="2" height="3" fill="#78a8e0"/></g></svg>
<span class="t" style="left:1375px;top:314px;letter-spacing:0.052px;color:#000;">C:\Windows\syswow64\cryptbase.dll</span>
<span class="t" style="left:1714.5px;top:314px;letter-spacing:-0.145px;color:#000;">755E0000</span>
<span class="t" style="left:1798px;top:314px;letter-spacing:-0.221px;color:#000;">0000C000</span>
<svg class="a" style="left:1354px;top:328px" width="17" height="16" viewBox="0 0 17 16"><g shape-rendering="crispEdges"><rect x="2" y="0" width="14" height="15" fill="url(#wg)"/><rect x="3" y="1" width="12" height="2" fill="url(#hg)"/><rect x="3" y="3" width="12" height="11" fill="#fff"/><rect x="0" y="7" width="8" height="9" fill="url(#dg)"/><rect x="1" y="8" width="6" height="7" fill="#fff"/><rect x="2" y="10" width="4" height="1" fill="#2858a8"/><rect x="2" y="12" width="4" height="1" fill="#2858a8"/><rect x="2" y="14" width="4" height="1" fill="#2858a8"/><rect x="9" y="4" width="6" height="9" fill="url(#dg)"/><rect x="10" y="5" width="4" height="7" fill="#fff"/><rect x="11" y="8" width="2" height="3" fill="#78a8e0"/></g></svg>
<span class="t" style="left:1375px;top:331px;letter-spacing:-0.050px;color:#000;">C:\Windows\syswow64\sspicli.dll</span>
<span class="t" style="left:1714.5px;top:331px;letter-spacing:-0.068px;color:#000;">755F0000</span>
<span class="t" style="left:1798px;top:331px;letter-spacing:0.007px;color:#000;">00060000</span>
<svg class="a" style="left:1354px;top:345px" width="17" height="16" viewBox="0 0 17 16"><g shape-rendering="crispEdges"><rect x="2" y="0" width="14" height="15" fill="url(#wg)"/><rect x="3" y="1" width="12" height="2" fill="url(#hg)"/><rect x="3" y="3" width="12" height="11" fill="#fff"/><rect x="0" y="7" width="8" height="9" fill="url(#dg)"/><rect x="1" y="8" width="6" height="7" fill="#fff"/><rect x="2" y="10" width="4" height="1" fill="#2858a8"/><rect x="2" y="12" width="4" height="1" fill="#2858a8"/><rect x="2" y="14" width="4" height="1" fill="#2858a8"/><rect x="9" y="4" width="6" height="9" fill="url(#dg)"/><rect x="10" y="5" width="4" height="7" fill="#fff"/><rect x="11" y="8" width="2" height="3" fill="#78a8e0"/></g></svg>
<span class="t" style="left:1375px;top:348px;letter-spacing:0.015px;color:#000;">C:\Windows\syswow64\usp10.dll</span>
<span class="t" style="left:1714.5px;top:348px;letter-spacing:-0.221px;color:#000;">757C0000</span>
<span class="t" style="left:1798px;top:348px;letter-spacing:-0.221px;color:#000;">0009D000</span>
<svg class="a" style="left:1354px;top:362px" width="17" height="16" viewBox="0 0 17 16"><g shape-rendering="crispEdges"><rect x="2" y="0" width="14" height="15" fill="url(#wg)"/><rect x="3" y="1" width="12" height="2" fill="url(#hg)"/><rect x="3" y="3" width="12" height="11" fill="#fff"/><rect x="0" y="7" width="8" height="9" fill="url(#dg)"/><rect x="1" y="8" width="6" height="7" fill="#fff"/><rect x="2" y="10" width="4" height="1" fill="#2858a8"/><rect x="2" y="12" width="4" height="1" fill="#2858a8"/><rect x="2" y="14" width="4" height="1" fill="#2858a8"/><rect x="9" y="4" width="6" height="9" fill="url(#dg)"/><rect x="10" y="5" width="4" height="7" fill="#fff"/><rect x="11" y="8" width="2" height="3" fill="#78a8e0"/></g></svg>
<span class="t" style="left:1375px;top:365px;letter-spacing:0.013px;color:#000;">C:\Windows\system32\advapi32.dll</span>
<span class="t" style="left:1714.5px;top:365px;letter-spacing:-0.221px;color:#000;">75C10000</span>
<span class="t" style="left:1798px;top:365px;letter-spacing:-0.145px;color:#000;">000A1000</span>
<svg class="a" style="left:1354px;top:379px" width="17" height="16" viewBox="0 0 17 16"><g shape-rendering="crispEdges"><rect x="2" y="0" width="14" height="15" fill="url(#wg)"/><rect x="3" y="1" width="12" height="2" fill="url(#hg)"/><rect x="3" y="3" width="12" height="11" fill="#fff"/><rect x="0" y="7" width="8" height="9" fill="url(#dg)"/><rect x="1" y="8" width="6" height="7" fill="#fff"/><rect x="2" y="10" width="4" height="1" fill="#2858a8"/><rect x="2" y="12" width="4" height="1" fill="#2858a8"/><rect x="2" y="14" width="4" height="1" fill="#2858a8"/><rect x="9" y="4" width="6" height="9" fill="url(#dg)"/><rect x="10" y="5" width="4" height="7" fill="#fff"/><rect x="11" y="8" width="2" height="3" fill="#78a8e0"/></g></svg>
<span class="t" style="left:1375px;top:382px;letter-spacing:0.023px;color:#000;">C:\Windows\system32\msvcrt.dll</span>
<span class="t" style="left:1714.5px;top:382px;letter-spacing:-0.374px;color:#000;">75ED0000</span>
<span class="t" style="left:1798px;top:382px;letter-spacing:-0.374px;color:#000;">000AC000</span>
<svg class="a" style="left:1354px;top:396px" width="17" height="16" viewBox="0 0 17 16"><g shape-rendering="crispEdges"><rect x="2" y="0" width="14" height="15" fill="url(#wg)"/><rect x="3" y="1" width="12" height="2" fill="url(#hg)"/><rect x="3" y="3" width="12" height="11" fill="#fff"/><rect x="0" y="7" width="8" height="9" fill="url(#dg)"/><rect x="1" y="8" width="6" height="7" fill="#fff"/><rect x="2" y="10" width="4" height="1" fill="#2858a8"/><rect x="2" y="12" width="4" height="1" fill="#2858a8"/><rect x="2" y="14" width="4" height="1" fill="#2858a8"/><rect x="9" y="4" width="6" height="9" fill="url(#dg)"/><rect x="10" y="5" width="4" height="7" fill="#fff"/><rect x="11" y="8" width="2" height="3" fill="#78a8e0"/></g></svg>
<span class="t" style="left:1375px;top:399px;letter-spacing:0.013px;color:#000;">C:\Windows\syswow64\lpk.dll</span>
<span class="t" style="left:1714.5px;top:399px;letter-spacing:-0.221px;color:#000;">76C00000</span>
<span class="t" style="left:1798px;top:399px;letter-spacing:-0.145px;color:#000;">0000A000</span>
<div class="a" style="left:1902px;top:257px;width:16px;height:156px;background:repeating-conic-gradient(#fff 0% 25%,#d4d0c8 0% 50%) 0 0/2px 2px;"></div>
<div class="a rs" style="left:1902px;top:257px;width:14px;height:14px;background:#d4d0c8;"></div>
<svg class="a" style="left:1906.0px;top:263.0px" width="8" height="4"><polygon points="0,4 8,4 4,0" fill="#000"/></svg>
<div class="a rs" style="left:1902px;top:397px;width:14px;height:14px;background:#d4d0c8;"></div>
<svg class="a" style="left:1906.0px;top:403.0px" width="8" height="4"><polygon points="0,0 8,0 4,4" fill="#000"/></svg>
<div class="a rs" style="left:1902px;top:273px;width:14px;height:47px;background:#d4d0c8;"></div>
<span class="t" style="left:1351px;top:416px;letter-spacing:-0.041px;">Line 1 of 17</span>
<div class="a et" style="left:1346px;top:436px;width:572px;height:18px;"></div>
<svg class="a" style="left:1350px;top:438px" width="16" height="16" viewBox="0 0 16 16"><g shape-rendering="crispEdges"><rect x="0" y="0" width="16" height="16" fill="url(#wg)"/><rect x="1" y="1" width="14" height="2" fill="url(#hg)"/><rect x="1" y="3" width="14" height="12" fill="#fff"/></g><rect x="7.5" y="8.5" width="5" height="5" fill="#f4fcff" stroke="url(#dg)"/><rect x="5.5" y="6.5" width="5" height="5" fill="#f4fcff" stroke="url(#dg)"/><rect x="3.5" y="4.5" width="5" height="5" fill="#f4fcff" stroke="url(#dg)"/></svg>
<span class="t" style="left:1370px;top:440px;letter-spacing:-0.194px;">Threads</span>
<svg class="a" style="left:1862px;top:442px" width="9" height="8" viewBox="0 0 9 8"><rect x="0.5" y="1" width="8" height="6.5" fill="none" stroke="#000"/><rect x="0" y="0" width="9" height="2" fill="#000"/></svg>
<svg class="a" style="left:1883px;top:442px" width="9" height="9" viewBox="0 0 9 9"><rect x="3.500" y="0.500" width="5" height="5" fill="none" stroke="#000"/><rect x="3" y="0" width="6" height="2" fill="#000"/><rect x="1.500" y="3.500" width="5" height="5" fill="#d4d0c8" stroke="#000"/><rect x="1" y="3" width="6" height="2" fill="#000"/></svg>
<svg class="a" style="left:1903px;top:442px" width="8" height="8" viewBox="0 0 8 8"><path d="M0.5 0.5L7.5 7.5M7.5 0.5L0.5 7.5" stroke="#000" stroke-width="1.5"/></svg>
<div class="a sk" style="left:1346px;top:458px;width:571px;height:58px;background:#fff;"></div>
<div class="a" style="left:1348px;top:460px;width:3px;height:20px;background:#d4d0c8;"></div>
<div class="a" style="left:1350px;top:461px;width:1px;height:19px;background:#fff;"></div>
<div class="a" style="left:1348px;top:481px;width:1px;height:17px;background:#d4d0c8;"></div>
<div class="a" style="left:1349px;top:481px;width:1px;height:17px;background:#808080;"></div>
<div class="a" style="left:1348px;top:497px;width:3px;height:1px;background:#808080;"></div>
<div class="a" style="left:1351px;top:460px;width:567px;height:20px;background:#d4d0c8;"></div>
<div class="a" style="left:1351px;top:461px;width:67px;height:19px;background:#d4d0c8;box-sizing:border-box;border:1px solid;border-color:#fff #404040 #404040 #fff;box-shadow:inset -1px -1px 0 #808080;"></div>
<span class="t" style="left:1354.5px;top:465px;letter-spacing:-0.604px;">Decimal</span>
<div class="a" style="left:1418px;top:461px;width:49px;height:19px;background:#d4d0c8;box-sizing:border-box;border:1px solid;border-color:#fff #404040 #404040 #fff;box-shadow:inset -1px -1px 0 #808080;"></div>
<span class="t" style="left:1421.5px;top:465px;letter-spacing:-0.187px;">Hex</span>
<div class="a" style="left:1467px;top:461px;width:93px;height:19px;background:#d4d0c8;box-sizing:border-box;border:1px solid;border-color:#fff #404040 #404040 #fff;box-shadow:inset -1px -1px 0 #808080;"></div>
<span class="t" style="left:1470.5px;top:465px;letter-spacing:0.063px;">State</span>
<div class="a" style="left:1351px;top:481px;width:209px;height:17px;background:#d4d0c8;"></div>
<svg class="a" style="left:1354px;top:481px" width="16" height="16" viewBox="0 0 16 16"><g shape-rendering="crispEdges"><rect x="0" y="0" width="16" height="16" fill="url(#wg)"/><rect x="1" y="1" width="14" height="2" fill="url(#hg)"/><rect x="1" y="3" width="14" height="12" fill="#fff"/></g><rect x="7.5" y="8.5" width="5" height="5" fill="#f4fcff" stroke="url(#dg)"/><rect x="5.5" y="6.5" width="5" height="5" fill="#f4fcff" stroke="url(#dg)"/><rect x="3.5" y="4.5" width="5" height="5" fill="#f4fcff" stroke="url(#dg)"/><rect width="16" height="16" fill="#808890" opacity="0.350"/></svg>
<span class="t" style="left:1376px;top:484px;letter-spacing:-0.368px;">2480</span>
<span class="t" style="left:1420.5px;top:484px;letter-spacing:-0.691px;">9B0</span>
<span class="t" style="left:1469px;top:484px;letter-spacing:-0.160px;">Ready</span>
<div class="a" style="left:1315px;top:235px;width:620px;height:187px;border:3px solid #00ff00;box-sizing:content-box;"></div>
<div class="a et" style="left:0px;top:523px;width:957px;height:18px;"></div>
<svg class="a" style="left:5px;top:525px" width="15" height="15" viewBox="0 0 15 15"><g shape-rendering="crispEdges"><rect width="15" height="15" fill="url(#wg)"/><rect x="1" y="1" width="13" height="2" fill="url(#hg)"/><rect x="1" y="3" width="13" height="11" fill="#fff"/></g><polygon points="7.500,4.200 11.700,6.500 11.700,11 7.500,13.300 3.300,11 3.300,6.500" fill="#e4ecff" stroke="#3030ff" stroke-width="1.100"/></svg>
<span class="t" style="left:25px;top:527px;letter-spacing:-0.154px;">Hex View-1</span>
<svg class="a" style="left:901px;top:528px" width="9" height="8" viewBox="0 0 9 8"><rect x="0.5" y="1" width="8" height="6.5" fill="none" stroke="#000"/><rect x="0" y="0" width="9" height="2" fill="#000"/></svg>
<svg class="a" style="left:921px;top:528px" width="9" height="9" viewBox="0 0 9 9"><rect x="3.500" y="0.500" width="5" height="5" fill="none" stroke="#000"/><rect x="3" y="0" width="6" height="2" fill="#000"/><rect x="1.500" y="3.500" width="5" height="5" fill="#d4d0c8" stroke="#000"/><rect x="1" y="3" width="6" height="2" fill="#000"/></svg>
<svg class="a" style="left:942px;top:529px" width="8" height="7" viewBox="0 0 8 7"><path d="M0.500 0.500L7.500 6.500M7.500 0.500L0.500 6.500" stroke="#000" stroke-width="1.500"/></svg>
<div class="a" style="left:0px;top:545px;width:958px;height:1px;background:#808080;"></div>
<div class="a" style="left:1px;top:546px;width:957px;height:1px;background:#404040;"></div>
<div class="a" style="left:0px;top:545px;width:1px;height:256px;background:#808080;"></div>
<div class="a" style="left:1px;top:546px;width:1px;height:255px;background:#404040;"></div>
<div class="a" style="left:0px;top:800px;width:958px;height:1px;background:#fff;"></div>
<div class="a" style="left:957px;top:545px;width:1px;height:256px;background:#fff;"></div>
<div class="a" style="left:2px;top:547px;width:939px;height:233px;background:#ccffff;"></div>
<div class="a" style="left:2px;top:780px;width:939px;height:20px;background:#d4d0c8;"></div>
<div class="m" style="left:3px;top:548px;"><span style="color:#808080">006C175D  </span><span style="color:#008000">15 </span><span style="color:#008000">E0 </span><span style="color:#008000">10 </span><span style="color:#008000">6C </span><span style="color:#008000">00 </span><span style="color:#008000">EB </span><span style="color:#008000">E3 </span><span style="color:#008000">33  </span><span style="color:#008000">C0 </span><span style="color:#008000">5D </span><span style="color:#008000">C2 </span><span style="color:#008000">04 </span><span style="color:#008000">00 </span><span style="color:#8080ff">90 </span><span style="color:#8080ff">90 </span><span style="color:#8080ff">90  </span><span style="color:#0000ff">.a.l.dp3+]-.....</span></div>
<div class="m" style="left:3px;top:563px;"><span style="color:#808080">006C176D  </span><span style="color:#8080ff">90 </span><span style="color:#8080ff">90 </span><span style="color:#008000">8B </span><span style="color:#008000">FF </span><span style="color:#008000">55 </span><span style="color:#008000">8B </span><span style="color:#008000">EC </span><span style="color:#008000">56  </span><span style="color:#008000">8B </span><span style="color:#008000">75 </span><span style="color:#008000">08 </span><span style="color:#008000">33 </span><span style="color:#008000">C0 </span><span style="color:#008000">3B </span><span style="color:#008000">75 </span><span style="color:#008000">0C  </span><span style="color:#0000ff">..ï·Uï8Vïu.3+;u.</span></div>
<div class="m" style="left:3px;top:578px;"><span style="color:#808080">006C177D  </span><span style="color:#008000">73 </span><span style="color:#008000">11 </span><span style="color:#008000">85 </span><span style="color:#008000">C0 </span><span style="color:#008000">75 </span><span style="color:#008000">0D </span><span style="color:#008000">8B </span><span style="color:#008000">0E  </span><span style="color:#008000">85 </span><span style="color:#008000">C9 </span><span style="color:#008000">74 </span><span style="color:#008000">02 </span><span style="color:#008000">FF </span><span style="color:#008000">D1 </span><span style="color:#008000">83 </span><span style="color:#008000">C6  </span><span style="color:#0000ff">s.à+u.ï.à+t.·–â¦</span></div>
<div class="m" style="left:3px;top:593px;"><span style="color:#808080">006C178D  </span><span style="color:#008000">04 </span><span style="color:#008000">EB </span><span style="color:#008000">EA </span><span style="color:#008000">5E </span><span style="color:#008000">5D </span><span style="color:#008000">C3 </span><span style="color:#8080ff">90 </span><span style="color:#8080ff">90  </span><span style="color:#8080ff">90 </span><span style="color:#8080ff">90 </span><span style="color:#8080ff">90 </span><span style="color:#008000">E8 </span><span style="color:#008000">02 </span><span style="color:#008000">FE </span><span style="color:#008000">FF </span><span style="color:#008000">FF  </span><span style="color:#0000ff">.dO^]+.....F.¦··</span></div>
<div class="a" style="left:82px;top:607px;width:40px;height:15px;background:#008000;"></div>
<div class="m" style="left:3px;top:608px;"><span style="color:#0000ff">006C179D  </span><span style="color:#ccffff">6A 5C</span><span style="color:#008000"> </span><span style="color:#008000">68 </span><span style="color:#008000">B0 </span><span style="color:#008000">18 </span><span style="color:#008000">6C </span><span style="color:#008000">00 </span><span style="color:#008000">E8  </span><span style="color:#008000">D3 </span><span style="color:#008000">08 </span><span style="color:#008000">00 </span><span style="color:#008000">00 </span><span style="color:#008000">33 </span><span style="color:#008000">DB </span><span style="color:#008000">89 </span><span style="color:#008000">5D  </span><span style="color:#0000ff">j\h¦.l.F+...3¦ë]</span></div>
<div class="m" style="left:3px;top:623px;"><span style="color:#808080">006C17AD  </span><span style="color:#008000">E4 </span><span style="color:#008000">89 </span><span style="color:#008000">5D </span><span style="color:#008000">FC </span><span style="color:#008000">8D </span><span style="color:#008000">45 </span><span style="color:#008000">94 </span><span style="color:#008000">50  </span><span style="color:#008000">FF </span><span style="color:#008000">15 </span><span style="color:#008000">C4 </span><span style="color:#008000">10 </span><span style="color:#008000">6C </span><span style="color:#008000">00 </span><span style="color:#008000">C7 </span><span style="color:#008000">45  </span><span style="color:#0000ff">Së]n.EöP·.–.l.¦E</span></div>
<div class="m" style="left:3px;top:638px;"><span style="color:#808080">006C17BD  </span><span style="color:#008000">FC </span><span style="color:#008000">FE </span><span style="color:#008000">FF </span><span style="color:#008000">FF </span><span style="color:#008000">FF </span><span style="color:#008000">C7 </span><span style="color:#008000">45 </span><span style="color:#008000">FC  </span><span style="color:#008000">01 </span><span style="color:#008000">00 </span><span style="color:#008000">00 </span><span style="color:#008000">00 </span><span style="color:#008000">64 </span><span style="color:#008000">A1 </span><span style="color:#008000">18 </span><span style="color:#008000">00  </span><span style="color:#0000ff">n¦···¦En....dí..</span></div>
<div class="m" style="left:3px;top:653px;"><span style="color:#808080">006C17CD  </span><span style="color:#008000">00 </span><span style="color:#008000">00 </span><span style="color:#008000">8B </span><span style="color:#008000">70 </span><span style="color:#008000">04 </span><span style="color:#008000">89 </span><span style="color:#008000">5D </span><span style="color:#008000">E0  </span><span style="color:#008000">BF </span><span style="color:#008000">68 </span><span style="color:#008000">50 </span><span style="color:#008000">6C </span><span style="color:#008000">00 </span><span style="color:#008000">53 </span><span style="color:#008000">56 </span><span style="color:#008000">57  </span><span style="color:#0000ff">..ïp.ë]a+hPl.SVW</span></div>
<div class="m" style="left:3px;top:668px;"><span style="color:#808080">006C17DD  </span><span style="color:#008000">FF </span><span style="color:#008000">15 </span><span style="color:#008000">70 </span><span style="color:#008000">10 </span><span style="color:#008000">6C </span><span style="color:#008000">00 </span><span style="color:#008000">3B </span><span style="color:#008000">C3  </span><span style="color:#008000">0F </span><span style="color:#008000">85 </span><span style="color:#008000">28 </span><span style="color:#008000">01 </span><span style="color:#008000">00 </span><span style="color:#008000">00 </span><span style="color:#008000">33 </span><span style="color:#008000">F6  </span><span style="color:#0000ff">·.p.l.;+.à(...3÷</span></div>
<div class="m" style="left:3px;top:683px;"><span style="color:#808080">006C17ED  </span><span style="color:#008000">46 </span><span style="color:#008000">A1 </span><span style="color:#008000">64 </span><span style="color:#008000">50 </span><span style="color:#008000">6C </span><span style="color:#008000">00 </span><span style="color:#008000">3B </span><span style="color:#008000">C6  </span><span style="color:#008000">0F </span><span style="color:#008000">84 </span><span style="color:#008000">37 </span><span style="color:#008000">01 </span><span style="color:#008000">00 </span><span style="color:#008000">00 </span><span style="color:#008000">A1 </span><span style="color:#008000">64  </span><span style="color:#0000ff">FídPl.;¦.ä7...íd</span></div>
<div class="m" style="left:3px;top:698px;"><span style="color:#808080">006C17FD  </span><span style="color:#008000">50 </span><span style="color:#008000">6C </span><span style="color:#008000">00 </span><span style="color:#008000">85 </span><span style="color:#008000">C0 </span><span style="color:#008000">0F </span><span style="color:#008000">85 </span><span style="color:#008000">28  </span><span style="color:#008000">0B </span><span style="color:#008000">00 </span><span style="color:#008000">00 </span><span style="color:#008000">89 </span><span style="color:#008000">35 </span><span style="color:#008000">64 </span><span style="color:#008000">50 </span><span style="color:#008000">6C  </span><span style="color:#0000ff">Pl.à+.à(...ë5dPl</span></div>
<div class="m" style="left:3px;top:713px;"><span style="color:#808080">006C180D  </span><span style="color:#008000">00 </span><span style="color:#008000">68 </span><span style="color:#008000">A8 </span><span style="color:#008000">18 </span><span style="color:#008000">6C </span><span style="color:#008000">00 </span><span style="color:#008000">68 </span><span style="color:#008000">9C  </span><span style="color:#008000">18 </span><span style="color:#008000">6C </span><span style="color:#008000">00 </span><span style="color:#008000">E8 </span><span style="color:#008000">52 </span><span style="color:#008000">FF </span><span style="color:#008000">FF </span><span style="color:#008000">FF  </span><span style="color:#0000ff">.h¿.l.h£.l.FR···</span></div>
<div class="m" style="left:3px;top:728px;"><span style="color:#808080">006C181D  </span><span style="color:#008000">59 </span><span style="color:#008000">59 </span><span style="color:#008000">85 </span><span style="color:#008000">C0 </span><span style="color:#008000">0F </span><span style="color:#008000">85 </span><span style="color:#008000">A1 </span><span style="color:#008000">01  </span><span style="color:#008000">00 </span><span style="color:#008000">00 </span><span style="color:#008000">A1 </span><span style="color:#008000">64 </span><span style="color:#008000">50 </span><span style="color:#008000">6C </span><span style="color:#008000">00 </span><span style="color:#008000">3B  </span><span style="color:#0000ff">YYà+.àí...ídPl.;</span></div>
<div class="m" style="left:3px;top:743px;"><span style="color:#808080">006C182D  </span><span style="color:#008000">C6 </span><span style="color:#008000">75 </span><span style="color:#008000">1B </span><span style="color:#008000">68 </span><span style="color:#008000">98 </span><span style="color:#008000">18 </span><span style="color:#008000">6C </span><span style="color:#008000">00  </span><span style="color:#008000">68 </span><span style="color:#008000">90 </span><span style="color:#008000">18 </span><span style="color:#008000">6C </span><span style="color:#008000">00 </span><span style="color:#008000">E8 </span><span style="color:#008000">4D </span><span style="color:#008000">FD  </span><span style="color:#0000ff">¦u.hÿ.l.h..l.FM²</span></div>
<div class="m" style="left:3px;top:758px;"><span style="color:#808080">006C183D  </span><span style="color:#008000">FF </span><span style="color:#008000">FF </span><span style="color:#008000">59 </span><span style="color:#008000">59 </span><span style="color:#008000">C7 </span><span style="color:#008000">05 </span><span style="color:#008000">64 </span><span style="color:#008000">50  </span><span style="color:#008000">6C </span><span style="color:#008000">00 </span><span style="color:#008000">02 </span><span style="color:#008000">00 </span><span style="color:#008000">00 </span><span style="color:#008000">00 </span><span style="color:#008000">39 </span><span style="color:#008000">5D  </span><span style="color:#0000ff">··YY¦.dPl.....9]</span></div>
<div class="a" style="left:941px;top:547px;width:16px;height:252px;background:repeating-conic-gradient(#fff 0% 25%,#d4d0c8 0% 50%) 0 0/2px 2px;"></div>
<div class="a rs" style="left:941px;top:547px;width:14px;height:14px;background:#d4d0c8;"></div>
<svg class="a" style="left:945.0px;top:553.0px" width="8" height="4"><polygon points="0,4 8,4 4,0" fill="#000"/></svg>
<div class="a rs" style="left:941px;top:783px;width:14px;height:14px;background:#d4d0c8;"></div>
<svg class="a" style="left:945.0px;top:789.0px" width="8" height="4"><polygon points="0,0 8,0 4,4" fill="#000"/></svg>
<div class="a rs" style="left:941px;top:572px;width:14px;height:7px;background:#d4d0c8;"></div>
<div class="a sk1" style="left:1px;top:780px;width:56px;height:14px;background:transparent;"></div>
<span class="c" style="left:2px;top:783px">00000B9D</span>
<div class="a sk1" style="left:62px;top:780px;width:120px;height:14px;background:transparent;"></div>
<span class="c" style="left:65px;top:783px">006C179D: start+5</span>
<div class="a et" style="left:962px;top:523px;width:956px;height:18px;"></div>
<svg class="a" style="left:967px;top:525px" width="15" height="15" viewBox="0 0 15 15"><g shape-rendering="crispEdges"><rect width="15" height="15" fill="url(#wg)"/><rect x="1" y="1" width="13" height="2" fill="url(#hg)"/><rect x="1" y="3" width="13" height="11" fill="#fff"/></g><polygon points="7.500,4.200 11.700,6.500 11.700,11 7.500,13.300 3.300,11 3.300,6.500" fill="#e4ecff" stroke="#3030ff" stroke-width="1.100"/></svg>
<span class="t" style="left:987.5px;top:527px;letter-spacing:-0.207px;">Stack view</span>
<svg class="a" style="left:1862px;top:528px" width="9" height="8" viewBox="0 0 9 8"><rect x="0.5" y="1" width="8" height="6.5" fill="none" stroke="#000"/><rect x="0" y="0" width="9" height="2" fill="#000"/></svg>
<svg class="a" style="left:1882px;top:528px" width="9" height="9" viewBox="0 0 9 9"><rect x="3.500" y="0.500" width="5" height="5" fill="none" stroke="#000"/><rect x="3" y="0" width="6" height="2" fill="#000"/><rect x="1.500" y="3.500" width="5" height="5" fill="#d4d0c8" stroke="#000"/><rect x="1" y="3" width="6" height="2" fill="#000"/></svg>
<svg class="a" style="left:1903px;top:529px" width="8" height="7" viewBox="0 0 8 7"><path d="M0.500 0.500L7.500 6.500M7.500 0.500L0.500 6.500" stroke="#000" stroke-width="1.500"/></svg>
<div class="a" style="left:962px;top:545px;width:958px;height:1px;background:#808080;"></div>
<div class="a" style="left:963px;top:546px;width:957px;height:1px;background:#404040;"></div>
<div class="a" style="left:962px;top:545px;width:1px;height:256px;background:#808080;"></div>
<div class="a" style="left:963px;top:546px;width:1px;height:255px;background:#404040;"></div>
<div class="a" style="left:962px;top:800px;width:958px;height:1px;background:#fff;"></div>
<div class="a" style="left:1919px;top:545px;width:1px;height:256px;background:#fff;"></div>
<div class="a" style="left:964px;top:547px;width:938px;height:233px;background:#ccffff;"></div>
<div class="a" style="left:964px;top:780px;width:938px;height:20px;background:#d4d0c8;"></div>
<div class="a" style="left:964px;top:547px;width:938px;height:15px;background:#64d0ff;"></div>
<div class="a" style="left:964px;top:547px;width:80px;height:15px;background:#64d0ff;"></div>
<div class="a" style="left:1044px;top:547px;width:80px;height:15px;background:#008000;"></div>
<div class="a" style="left:1124px;top:547px;width:96px;height:15px;background:#0000ff;"></div>
<div class="a" style="left:1220px;top:547px;width:192px;height:15px;background:#000080;"></div>
<div class="m" style="left:965px;top:548px;"><span style="color:#0000ff">002CE500  </span><span style="color:#64d0ff">754BA102  </span><span style="color:#64d0ff">apphelp.dll:</span><span style="color:#64d0ff">apphelp_ShimDbgPrint+121</span></div>
<div class="m" style="left:965px;top:563px;"><span style="color:#808080">002CE504  </span><span style="color:#008000">008B4190  </span><span style="color:#808080">debug018:008B4190</span></div>
<div class="m" style="left:965px;top:578px;"><span style="color:#808080">002CE508  </span><span style="color:#008000">02080000  </span><span style="color:#808080"></span></div>
<div class="m" style="left:965px;top:593px;"><span style="color:#808080">002CE50C  </span><span style="color:#008000">002CE510  </span><span style="color:#808080">Stack[000009B0]:002CE510</span></div>
<div class="m" style="left:965px;top:608px;"><span style="color:#808080">002CE510  </span><span style="color:#008000">002CE5A0  </span><span style="color:#808080">Stack[000009B0]:002CE5A0</span></div>
<div class="m" style="left:965px;top:623px;"><span style="color:#808080">002CE514  </span><span style="color:#008000">008B2F78  </span><span style="color:#808080">debug018:008B2F78</span></div>
<div class="m" style="left:965px;top:638px;"><span style="color:#808080">002CE518  </span><span style="color:#008000">76FC0000  </span><span style="color:#808080">KernelBase.dll:76FC0000</span></div>
<div class="m" style="left:965px;top:653px;"><span style="color:#808080">002CE51C  </span><span style="color:#008000">006C006C  </span><span style="color:#808080">HEADER:006C006C</span></div>
<div class="m" style="left:965px;top:668px;"><span style="color:#808080">002CE520  </span><span style="color:#008000">00000000  </span><span style="color:#808080"></span></div>
<div class="m" style="left:965px;top:683px;"><span style="color:#808080">002CE524  </span><span style="color:#008000">000000F0  </span><span style="color:#808080"></span></div>
<div class="m" style="left:965px;top:698px;"><span style="color:#808080">002CE528  </span><span style="color:#008000">76FC00F0  </span><span style="color:#808080">KernelBase.dll:76FC00F0</span></div>
<div class="m" style="left:965px;top:713px;"><span style="color:#808080">002CE52C  </span><span style="color:#008000">00000000  </span><span style="color:#808080"></span></div>
<div class="m" style="left:965px;top:728px;"><span style="color:#808080">002CE530  </span><span style="color:#008000">002CE50C  </span><span style="color:#808080">Stack[000009B0]:002CE50C</span></div>
<div class="m" style="left:965px;top:743px;"><span style="color:#808080">002CE534  </span><span style="color:#008000">002CE47C  </span><span style="color:#808080">Stack[000009B0]:002CE47C</span></div>
<div class="m" style="left:965px;top:758px;"><span style="color:#808080">002CE538  </span><span style="color:#008000">002CE5D8  </span><span style="color:#808080">Stack[000009B0]:002CE5D8</span></div>
<div class="a" style="left:1902px;top:547px;width:16px;height:252px;background:repeating-conic-gradient(#fff 0% 25%,#d4d0c8 0% 50%) 0 0/2px 2px;"></div>
<div class="a rs" style="left:1902px;top:547px;width:14px;height:14px;background:#d4d0c8;"></div>
<svg class="a" style="left:1906.0px;top:553.0px" width="8" height="4"><polygon points="0,4 8,4 4,0" fill="#000"/></svg>
<div class="a rs" style="left:1902px;top:783px;width:14px;height:14px;background:#d4d0c8;"></div>
<svg class="a" style="left:1906.0px;top:789.0px" width="8" height="4"><polygon points="0,0 8,0 4,4" fill="#000"/></svg>
<div class="a rs" style="left:1902px;top:572px;width:14px;height:7px;background:#d4d0c8;"></div>
<div class="a sk1" style="left:964px;top:780px;width:48px;height:14px;background:transparent;"></div>
<span class="c" style="left:964px;top:783px">UNKNOWN</span>
<div class="a sk1" style="left:1017px;top:780px;width:239px;height:14px;background:transparent;"></div>
<span class="c" style="left:1020px;top:783px">002CE500: Stack[000009B0]:002CE500</span>
<div class="a et" style="left:0px;top:805px;width:1918px;height:18px;"></div>
<svg class="a" style="left:6px;top:807px" width="14" height="16" viewBox="0 0 14 16"><g shape-rendering="crispEdges"><rect width="14" height="16" fill="#8098b8"/><rect x="1" y="1" width="12" height="14" fill="#fff"/><rect x="0" y="0" width="14" height="3" fill="url(#hg)"/><rect x="3" y="5" width="8" height="1" fill="#4860a0"/><rect x="3" y="7" width="8" height="1" fill="#4860a0"/><rect x="3" y="9" width="8" height="1" fill="#4860a0"/><rect x="3" y="11" width="8" height="1" fill="#4860a0"/><rect x="3" y="13" width="8" height="1" fill="#4860a0"/></g></svg>
<span class="t" style="left:26px;top:809px;letter-spacing:-0.059px;">Output window</span>
<svg class="a" style="left:1862px;top:811px" width="9" height="8" viewBox="0 0 9 8"><rect x="0.5" y="1" width="8" height="6.5" fill="none" stroke="#000"/><rect x="0" y="0" width="9" height="2" fill="#000"/></svg>
<svg class="a" style="left:1882px;top:811px" width="9" height="9" viewBox="0 0 9 9"><rect x="3.500" y="0.500" width="5" height="5" fill="none" stroke="#000"/><rect x="3" y="0" width="6" height="2" fill="#000"/><rect x="1.500" y="3.500" width="5" height="5" fill="#d4d0c8" stroke="#000"/><rect x="1" y="3" width="6" height="2" fill="#000"/></svg>
<svg class="a" style="left:1903px;top:812px" width="8" height="7" viewBox="0 0 8 7"><path d="M0.500 0.500L7.500 6.500M7.500 0.500L0.500 6.500" stroke="#000" stroke-width="1.500"/></svg>
<div class="a" style="left:0px;top:827px;width:1920px;height:1px;background:#808080;"></div>
<div class="a" style="left:1px;top:828px;width:1919px;height:1px;background:#404040;"></div>
<div class="a" style="left:0px;top:827px;width:1px;height:59px;background:#808080;"></div>
<div class="a" style="left:1px;top:828px;width:1px;height:58px;background:#404040;"></div>
<div class="a" style="left:0px;top:885px;width:1920px;height:1px;background:#fff;"></div>
<div class="a" style="left:1919px;top:827px;width:1px;height:59px;background:#fff;"></div>
<div class="a" style="left:2px;top:829px;width:1900px;height:56px;background:#fff;overflow:hidden;"><div class="o" style="left:4px;top:-4px">76C10000: loaded C:\Windows\syswow64\imagehlp.dll</div><div class="o" style="left:4px;top:11px">76DA0000: loaded C:\Windows\syswow64\shlwapi.dll</div><div class="o" style="left:4px;top:26px">754B0000: loaded C:\Windows\SysWOW64\apphelp.dll</div><div class="o" style="left:4px;top:41px">PDBSRC: loading symbols for 'C:\Windows\SysWOW64\apphelp.dll'...</div></div>
<div class="a" style="left:1902px;top:829px;width:16px;height:56px;background:repeating-conic-gradient(#fff 0% 25%,#d4d0c8 0% 50%) 0 0/2px 2px;"></div>
<div class="a rs" style="left:1902px;top:829px;width:14px;height:14px;background:#d4d0c8;"></div>
<svg class="a" style="left:1906.0px;top:835.0px" width="8" height="4"><polygon points="0,4 8,4 4,0" fill="#000"/></svg>
<div class="a rs" style="left:1902px;top:869px;width:14px;height:14px;background:#d4d0c8;"></div>
<svg class="a" style="left:1906.0px;top:875.0px" width="8" height="4"><polygon points="0,0 8,0 4,4" fill="#000"/></svg>
<div class="a rs" style="left:1902px;top:859px;width:14px;height:7px;background:#d4d0c8;"></div>
<div class="a rs" style="left:1px;top:887px;width:46px;height:22px;background:#d4d0c8;"></div>
<span class="t" style="left:7.2px;top:893px;letter-spacing:-0.041px;">Python</span>
<div class="a sk" style="left:52px;top:887px;width:1864px;height:22px;background:#fff;"></div>
<div class="a sk1" style="left:0px;top:914px;width:78px;height:14px;background:transparent;"></div>
<span class="c" style="left:2px;top:917px">AU:  idle</span>
<div class="a sk1" style="left:83px;top:914px;width:71px;height:14px;background:transparent;"></div>
<span class="c" style="left:85px;top:917px">Down</span>
<div class="a sk1" style="left:159px;top:914px;width:71px;height:14px;background:transparent;"></div>
<span class="c" style="left:161px;top:917px">Disk: 3GB</span>
<div class="a" style="left:0px;top:932px;width:1920px;height:1px;background:#fff;"></div>
<div class="a rs" style="left:2px;top:935px;width:50px;height:36px;background:#d4d0c8;"></div>
<svg class="a" style="left:4px;top:945px" width="17" height="15" viewBox="0 0 17 15"><path d="M1.500 3.500q2.500-2 6-0.800l-1 5q-3.200-1.200-6 0.500z" fill="#e8502c"/><path d="M8.500 3q3.200 1.200 6.500-0.800l-1 5q-3.200 2-6.500 0.800z" fill="#78b830"/><path d="M0.300 9.300q2.800-1.700 6-0.500l-1 5q-3.200-1.200-6 0.500z" fill="#3890e0"/><path d="M7.300 9q3.200 1.200 6.500-0.800l-1 5q-3.200 2-6.500 0.800z" fill="#f8c020"/></svg>
<span class="t" style="left:21px;top:947.5px;letter-spacing:0.788px;font-weight:bold;">Start</span>
<svg class="a" style="left:71px;top:937px" width="33" height="33" viewBox="0 0 33 33"><defs><radialGradient id="ieg" cx="0.4" cy="0.35" r="0.7"><stop offset="0" stop-color="#58c0f8"/><stop offset="1" stop-color="#0c50b0"/></radialGradient></defs><path d="M17.500 5.500a11.500 11.500 0 1 0 10.800 15.500h-6.300a6 6 0 0 1-10.500-2.500h17.300a11.500 11.500 0 0 0-11.300-13zM11.800 14a5.800 5.800 0 0 1 11 0z" fill="url(#ieg)"/><ellipse cx="16" cy="17" rx="17.500" ry="6" fill="none" stroke="#f0b010" stroke-width="1.800" transform="rotate(-42 16 17)" stroke-dasharray="58 14"/></svg>
<div class="a rs" style="left:113px;top:935px;width:38px;height:36px;background:#d4d0c8;"></div>
<div class="a" style="left:155px;top:936px;width:1px;height:37px;background:#808080;"></div>
<div class="a" style="left:156px;top:936px;width:1px;height:37px;background:#404040;"></div>
<div class="a" style="left:159px;top:936px;width:1px;height:37px;background:#808080;"></div>
<div class="a" style="left:160px;top:936px;width:1px;height:37px;background:#404040;"></div>
<svg class="a" style="left:116px;top:940px" width="34" height="31" viewBox="0 0 34 31"><path d="M1.500 7.500v-3.500q0-1.500 1.500-1.500h10q1.500 0 2 1.500l1 2h14q1.500 0 1.500 1.500v18q0 1.500-1.500 1.500h-27q-1.500 0-1.500-1.500z" fill="#f4dc88" stroke="#d0b050"/><rect x="4" y="2.500" width="9" height="3" fill="#fff"/><rect x="4" y="2.500" width="3" height="2" fill="#20b040"/><rect x="12" y="4.500" width="9" height="3" fill="#fff"/><rect x="12" y="4.500" width="3" height="2" fill="#e03020"/><rect x="19" y="6.500" width="10" height="3" fill="#fff"/><rect x="19" y="6.500" width="3" height="2" fill="#2090f0"/><path d="M2 10h29v15.500h-29z" fill="#f8e498"/><path d="M5.500 18q0-2 2-2h17q2 0 2 2v10.500h-5v-6.500h-11v6.500h-5z" fill="#78c4f4" stroke="#3c94d8"/></svg>
<svg class="a" style="left:172px;top:942px" width="30" height="27" viewBox="0 0 30 27"><path d="M5 1.500l22 2v20l-22 2z" fill="#88b8e0" stroke="#6898c8"/><path d="M3 1l22 2v21l-22 2z" fill="#a0c8ec" stroke="#78a8d8"/><path d="M1 0.500l21 2v22l-21 2z" fill="#b0d4f4" stroke="#78a8d8"/><circle cx="11.800" cy="13" r="9.300" fill="#f07818"/><circle cx="11.800" cy="13" r="7.800" fill="#f89030"/><polygon points="8.500,7.500 18,13 8.500,18.500" fill="#fff"/></svg>
<div class="a rs" style="left:213px;top:935px;width:46px;height:36px;background:#d4d0c8;"></div>
<svg class="a" style="left:222px;top:939px" width="30" height="30" viewBox="0 0 30 30"><circle cx="15" cy="15" r="14.500" fill="#e04030"/><path d="M15 15L2.500 7.500A14.500 14.500 0 0 0 11 29z" fill="#30a050"/><path d="M15 15L11 29A14.500 14.500 0 0 0 29.500 15z" fill="#f8c820"/><path d="M15 15h14.500A14.500 14.500 0 0 0 27.500 7.500z" fill="#e04030"/><circle cx="15" cy="15" r="6.500" fill="#fff"/><circle cx="15" cy="15" r="5.200" fill="#4888f0"/></svg>
<svg class="a" style="left:271px;top:938px" width="32" height="32" viewBox="0 0 32 32"><defs><radialGradient id="ffb" cx="0.45" cy="0.3" r="0.75"><stop offset="0" stop-color="#48b0f0"/><stop offset="0.6" stop-color="#2058b0"/><stop offset="1" stop-color="#102868"/></radialGradient><linearGradient id="ffo" x1="0" y1="0" x2="1" y2="1"><stop offset="0" stop-color="#f89020"/><stop offset="1" stop-color="#d83c10"/></linearGradient></defs><circle cx="17" cy="15" r="12" fill="url(#ffb)"/><path d="M3 6q2-2 3-5q2 3 5 3q-1 2 0 4q2 1 4 0.500q-1 3-4 3.500q0 4 4 5q4 1 7-2q1 4-2 7q5-2 7-8q1 8-5 12q-7 4-14 0q-7-5-6-13q0-4 1-7.500z" fill="url(#ffo)"/><path d="M25 4q6 5 5.500 12q-0.500 6-5 10q4-7 2-13q-1-5-2.500-9z" fill="#f8c830"/><path d="M10 10q3 1 5 0.500q-1 2-3 2.500z" fill="#fff0d0" opacity="0.500"/></svg>
<div class="a rs" style="left:313px;top:935px;width:46px;height:36px;background:#d4d0c8;"></div>
<svg class="a" style="left:321px;top:938px" width="32" height="32" viewBox="0 0 32 32"><rect width="32" height="32" fill="#00a4ec"/><circle cx="13.600" cy="16.500" r="9.800" fill="none" stroke="#fff" stroke-width="1.500"/><path d="M7.500 15l6.300 6.800l12.800-14.300" fill="none" stroke="#fff" stroke-width="4.200"/></svg>
<div class="a rs" style="left:363px;top:935px;width:46px;height:36px;background:#d4d0c8;"></div>
<svg class="a" style="left:370px;top:939px" width="34" height="30" viewBox="0 0 34 30"><ellipse cx="13" cy="4.500" rx="6" ry="3.800" fill="#f06818"/><path d="M19 6q6 2 13-1l-3 12q-5 2-11 0z" fill="#70b030"/><path d="M15 17q6 2 12 0l-2 10q-5 3-11 0z" fill="#f4cc18"/><polygon points="6,7.500 27,7.500 22.500,25 1,25" fill="#fce2d2" stroke="#3850b8" stroke-width="1.200"/><polygon points="6,7.500 27,7.500 26,11 5,11" fill="#4878c8"/><rect x="17.500" y="8.500" width="1.500" height="1.500" fill="#b0d8ff"/><rect x="20" y="8.500" width="1.500" height="1.500" fill="#b0d8ff"/><rect x="22.500" y="8.500" width="1.500" height="1.500" fill="#f08030"/><polygon points="8,14 21.500,14 20.300,19 6.800,19" fill="#f8fcff" stroke="#90a888" stroke-width="1"/><path d="M8.500 18l2-3.500" stroke="#606060" stroke-width="1.200"/></svg>
<div class="a rs" style="left:413px;top:935px;width:46px;height:36px;background:#d4d0c8;"></div>
<svg class="a" style="left:421px;top:941px" width="30" height="25" viewBox="0 0 30 25"><rect x="0.500" y="0.500" width="29" height="24" fill="#000" stroke="#606870"/><rect x="1" y="1" width="28" height="2.500" fill="#c8d0e0"/><path d="M1 4h28v5q-16 1-28 8z" fill="#303840" opacity="0.550"/><text x="3.500" y="12.500" font-family="Liberation Mono" font-weight="bold" font-size="8" fill="#fff">C:\</text><rect x="18" y="11.500" width="8" height="1.200" fill="#fff"/></svg>
<div class="a rs" style="left:463px;top:935px;width:46px;height:36px;background:#d4d0c8;"></div>
<svg class="a" style="left:470px;top:937px" width="34" height="34" viewBox="0 0 34 34"><defs><linearGradient id="hnd" x1="0" y1="0" x2="1" y2="1"><stop offset="0" stop-color="#d8d8d8"/><stop offset="1" stop-color="#606468"/></linearGradient></defs><rect x="1.500" y="1.500" width="18" height="18" rx="1" fill="#383838" stroke="#000" stroke-width="1.400"/><rect x="3" y="3" width="15" height="15" fill="none" stroke="#a0a0a0" stroke-width="1"/><rect x="4.500" y="5" width="1.300" height="2.300" fill="#f8c020"/><rect x="6.800" y="5" width="1.300" height="2.300" fill="#f8c020"/><rect x="9.100" y="5" width="1.300" height="2.300" fill="#f8c020"/><rect x="11.400" y="5" width="1.300" height="2.300" fill="#f8c020"/><rect x="13.700" y="5" width="1.300" height="2.300" fill="#f8c020"/><rect x="3.500" y="16" width="5" height="2" fill="#18d828"/><rect x="13.500" y="16" width="4.500" height="2" fill="#f8a828"/><path d="M16 19.500L6 30.500" stroke="#505458" stroke-width="4.600" stroke-linecap="round"/><path d="M16 19.500L6 30.500" stroke="url(#hnd)" stroke-width="3" stroke-linecap="round"/><circle cx="21.300" cy="11" r="9.600" fill="#c4dcf8" fill-opacity="0.860" stroke="#7c848c" stroke-width="1.600"/><path d="M13 13q8-6 16-6" stroke="#88b0e8" stroke-width="1" fill="none" opacity="0.700"/><path d="M21 2v17" stroke="#e8f0ff" stroke-width="0.800" opacity="0.700"/></svg>
<div class="a rs" style="left:513px;top:935px;width:41px;height:36px;background:#d4d0c8;"></div>
<div class="a" style="left:559px;top:936px;width:1px;height:37px;background:#808080;"></div>
<div class="a" style="left:560px;top:936px;width:1px;height:37px;background:#404040;"></div>
<svg class="a" style="left:518px;top:939px" width="33" height="31" viewBox="0 0 33 31"><defs><linearGradient id="npg" x1="0.3" y1="0" x2="0.5" y2="1"><stop offset="0" stop-color="#b8e4f4"/><stop offset="1" stop-color="#3c9cc0"/></linearGradient></defs><polygon points="29,5.500 31.300,7 31,24 25,29.500" fill="#c09848"/><polygon points="29,5 30.500,24.500 24,29 20,27" fill="#f0f4f8" stroke="#c8d0d8" stroke-width="0.500"/><polygon points="12,1.300 29,5 20,27 1.400,20.400" fill="url(#npg)"/><path d="M12.500 1.300l16.500 3.600" stroke="#607078" stroke-width="1.600" stroke-dasharray="1 1"/></svg>
<div class="a" style="left:563px;top:935px;width:48px;height:38px;background:#fff;box-sizing:border-box;border:1px solid;border-color:#404040 #fff #fff #404040;box-shadow:inset 1px 1px 0 #808080;"></div>
<div class="a" style="left:565px;top:937px;width:41px;height:35px;background:#fff;"></div>
<div class="a" style="left:606px;top:937px;width:4px;height:35px;background:#d4d0c8;"></div>
<div class="a" style="left:607px;top:937px;width:1px;height:35px;background:#fff;"></div>
<svg class="a" style="left:568px;top:937px" width="34" height="34" viewBox="0 0 34 34"><g transform="scale(2.080)"><path d="M4.500 10.500L9 9.500L12.500 13.500L15.500 16H2.500Q6 15 6 12.500z" fill="#e4c0a8"/><path d="M0.800 5.500Q1.500 0.500 7 0.300Q11 0.800 12 3.500Q15.800 3.200 15.600 7.200Q15 10.800 11.500 10.500L12.500 14L10.500 13L8.500 10L6.500 5.500L3.500 2.800z" fill="#1c120e"/><path d="M1.500 4.500Q3 2 5.500 2.800Q8.300 5.500 8.600 9.500L8.300 11.500Q5.500 12 3.500 10.500Q1.500 8 1.500 4.500z" fill="#ecd0b8"/><path d="M8 9l1.500 3.500l3 3.500h-9q2.500-1 2.500-4z" fill="#e4c0a8"/><rect x="3" y="9" width="1.600" height="0.800" fill="#c86048"/><rect x="2.800" y="5.600" width="1.600" height="0.600" fill="#806050"/><rect x="5.800" y="5.600" width="1.600" height="0.600" fill="#806050"/></g></svg>
<div class="a rs" style="left:613px;top:935px;width:46px;height:36px;background:#d4d0c8;"></div>
<svg class="a" style="left:621px;top:942px" width="32" height="24" viewBox="0 0 32 24"><rect width="32" height="24" fill="#fff"/><circle cx="24.300" cy="12" r="7.600" fill="#f0a030"/><path d="M1.500 5v13.500M8.500 5v13.500M1.500 11.800h7" stroke="#58b068" stroke-width="2.800" fill="none"/><path d="M20.500 7h3q4.500 0 4.500 5t-4.500 5h-3z" fill="#f0a030" stroke="#e4e8f0" stroke-width="2"/><path d="M10 7.500l10 10.500M20 7.500l-10 10.500" stroke="#000" stroke-width="2.400"/></svg>
<div class="a rs" style="left:663px;top:935px;width:46px;height:36px;background:#d4d0c8;"></div>
<svg class="a" style="left:671px;top:938px" width="32" height="33" viewBox="0 0 32 33"><g fill="none" stroke-linecap="round"><path d="M14.600 16.400L17.800 4.500M14.600 16.400L29 11.800M14.600 16.400L3 22.800M14.600 16.400L13.600 29M14.600 16.400L25.500 28" stroke="#000" stroke-width="6.400"/><circle cx="14.600" cy="16.400" r="6.200" fill="#000"/><ellipse cx="6" cy="4.300" rx="3.300" ry="4.800" transform="rotate(-42 6 4.300)" fill="#000"/><path d="M14.600 16.400L17.800 4.500M14.600 16.400L29 11.800M14.600 16.400L3 22.800M14.600 16.400L13.600 29M14.600 16.400L25.500 28" stroke="#e40000" stroke-width="4.600"/><circle cx="14.600" cy="16.400" r="5.300" fill="#e40000"/><ellipse cx="6" cy="4.300" rx="2.400" ry="3.900" transform="rotate(-42 6 4.300)" fill="#e40000"/></g></svg>
<div class="a rs" style="left:713px;top:935px;width:46px;height:36px;background:#d4d0c8;"></div>
<svg class="a" style="left:721px;top:938px" width="32" height="33" viewBox="0 0 32 33"><g fill="none" stroke-linecap="round"><path d="M14.600 16.400L17.800 4.500M14.600 16.400L29 11.800M14.600 16.400L3 22.800M14.600 16.400L13.600 29M14.600 16.400L25.500 28" stroke="#000" stroke-width="6.400"/><circle cx="14.600" cy="16.400" r="6.200" fill="#000"/><ellipse cx="6" cy="4.300" rx="3.300" ry="4.800" transform="rotate(-42 6 4.300)" fill="#000"/><path d="M14.600 16.400L17.800 4.500M14.600 16.400L29 11.800M14.600 16.400L3 22.800M14.600 16.400L13.600 29M14.600 16.400L25.500 28" stroke="#00e400" stroke-width="4.600"/><circle cx="14.600" cy="16.400" r="5.300" fill="#00e400"/><ellipse cx="6" cy="4.300" rx="2.400" ry="3.900" transform="rotate(-42 6 4.300)" fill="#00e400"/></g></svg>
<div class="a sk1" style="left:1722px;top:935px;width:194px;height:35px;background:transparent;"></div>
<svg class="a" style="left:1729px;top:948px" width="6" height="9" viewBox="0 0 6 9"><path d="M0.500 4L3 1.500L5.500 4M0.500 8L3 5.500L5.500 8" stroke="#000" stroke-width="1.400" fill="none"/></svg>
<svg class="a" style="left:1744px;top:945px" width="18" height="18" viewBox="0 0 18 18"><path d="M2.500 1.500v15" stroke="#505050" stroke-width="1.600"/><path d="M3.500 3q3-2 6 0t6 0v7q-3 2-6 0t-6 0z" fill="#f4f4f4" stroke="#707070" stroke-width="0.900"/><circle cx="12.300" cy="12.300" r="4.600" fill="#e42020" stroke="#fff" stroke-width="0.600"/><path d="M10.300 10.300l4 4M14.300 10.300l-4 4" stroke="#fff" stroke-width="1.500"/></svg>
<svg class="a" style="left:1768px;top:945px" width="18" height="18" viewBox="0 0 18 18"><rect x="1.500" y="4.500" width="7" height="11" rx="1" fill="#f0f0f0" stroke="#404040" stroke-width="1.100"/><rect x="3.500" y="2.500" width="7" height="11" rx="1" fill="#f0f0f0" stroke="#404040" stroke-width="1.100"/><path d="M9 3h6v4q0 2-2 2h-2q-2 0-2-2z" fill="#fff" stroke="#404040" stroke-width="1.100"/><path d="M10.500 1v2M13.500 1v2M12 9v6h-2" fill="none" stroke="#404040" stroke-width="1.200"/></svg>
<svg class="a" style="left:1792px;top:945px" width="18" height="18" viewBox="0 0 18 18"><path d="M2 1.500v4q0 1.500 1.500 1.500t1.500-1.500v-4M3.500 7v9" fill="none" stroke="#404040" stroke-width="1.200"/><rect x="5.500" y="4.500" width="10" height="10" fill="#a8a8a8" stroke="#404040" stroke-width="1.100"/><rect x="7" y="6" width="7" height="5" fill="#c8c8c8"/><polygon points="11.500,9.500 16,16.500 7,16.500" fill="#f8d820" stroke="#907000" stroke-width="0.500"/><rect x="11.100" y="12" width="1" height="2.500" fill="#000"/><rect x="11.100" y="15" width="1" height="1" fill="#000"/></svg>
<svg class="a" style="left:1816px;top:945px" width="18" height="18" viewBox="0 0 18 18"><polygon points="1.500,6.500 5,6.500 9,2.500 9,15.500 5,11.500 1.500,11.500" fill="#f0f0f0" stroke="#505050" stroke-width="1"/><path d="M11 6.500q2 2.500 0 5M13 4.500q3.500 4.500 0 9M15 3q4.500 6 0 12" fill="none" stroke="#707070" stroke-width="1.100"/></svg>
<span class="t" style="left:1850px;top:940px;letter-spacing:-0.281px;">6:15 PM</span>
<span class="t" style="left:1842.5px;top:956px;letter-spacing:0.076px;">11/29/2017</span>
<svg class="a" style="left:1900px;top:948px" width="16" height="13" viewBox="0 0 16 13"><defs><linearGradient id="sdg" x1="0" y1="0" x2="1" y2="1"><stop offset="0" stop-color="#2858b8"/><stop offset="1" stop-color="#68a8e8"/></linearGradient></defs><rect x="0.500" y="0.500" width="15" height="12" fill="url(#sdg)" stroke="#98b8e0"/><rect x="1" y="9.500" width="14" height="2.500" fill="#303840"/><rect x="2" y="9" width="2" height="2" fill="#e8a030"/></svg>
</body></html>
